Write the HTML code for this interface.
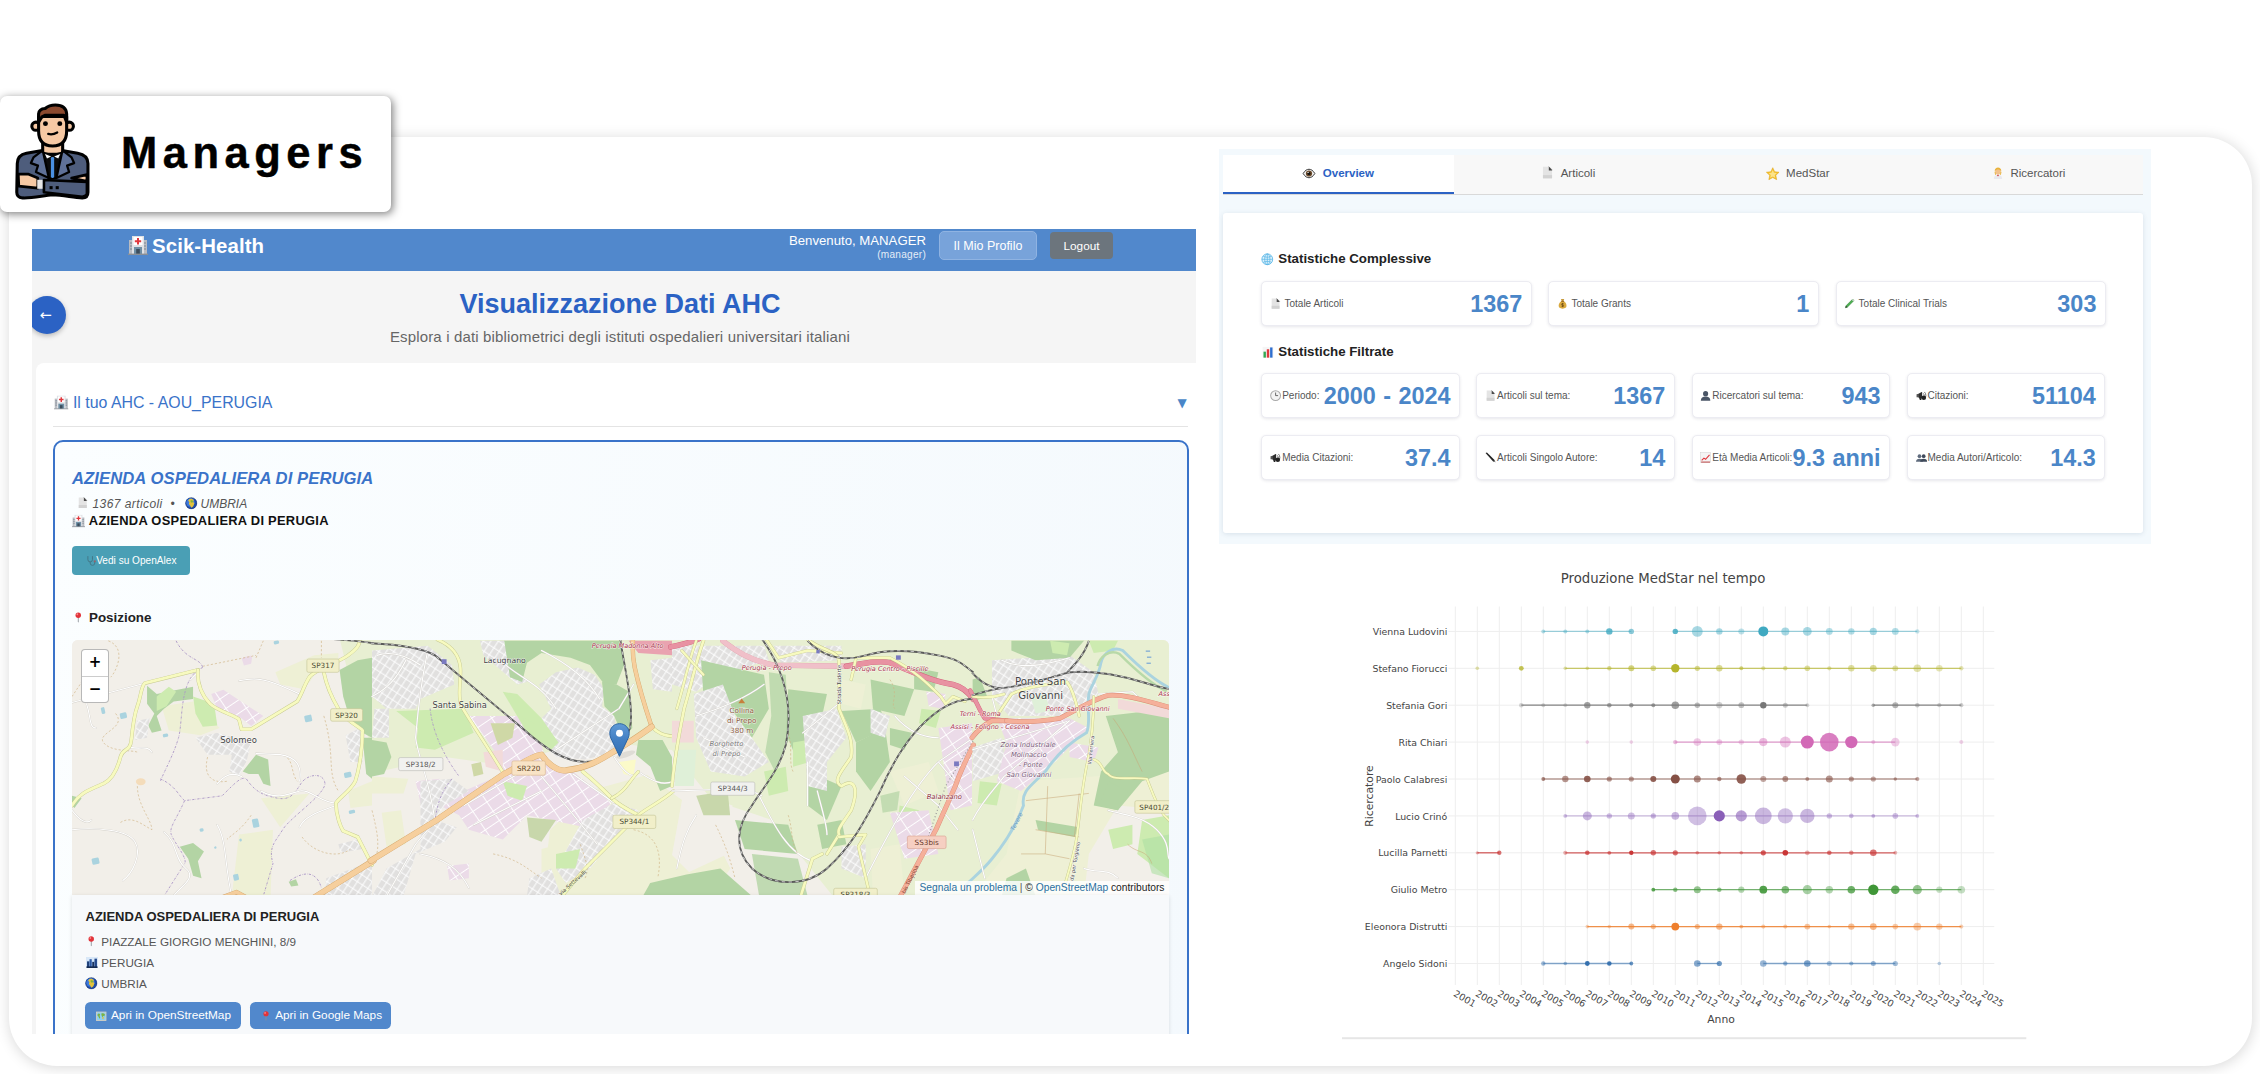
<!DOCTYPE html>
<html lang="it">
<head>
<meta charset="utf-8">
<title>Managers</title>
<style>
*{box-sizing:border-box;margin:0;padding:0}
html,body{width:2260px;height:1074px;overflow:hidden;background:#fff}
body{position:relative;font-family:"Liberation Sans",sans-serif;color:#222}
.abs{position:absolute}
svg{display:block}
.i{position:absolute;overflow:visible}
#outer{left:9.3px;top:137px;width:2242.7px;height:929px;background:#fff;border-radius:48px;box-shadow:.5px 1.5px 14px rgba(0,0,0,.15)}
#badge{left:0;top:96px;width:391px;height:116px;background:#fff;border-radius:7px;box-shadow:1.5px 2px 8px rgba(0,0,0,.5)}
#badge .t{left:121px;top:28.5px;font-weight:bold;font-size:43.5px;letter-spacing:5.5px;color:#000;white-space:nowrap;line-height:56px;-webkit-text-stroke:.45px #000}
#app{left:32px;top:229px;width:1164px;height:805px;background:#f5f5f5;overflow:hidden}
#nav{left:0;top:0;width:1164px;height:42px;background:#5188cc;color:#fff}
#nav .brand{left:120px;top:5px;font-size:20.4px;font-weight:bold;line-height:24px;white-space:nowrap;letter-spacing:.1px}
#nav .wel{right:270px;top:3.5px;text-align:right;font-size:13.2px;line-height:16px;white-space:nowrap}
#nav .wel small{display:block;font-size:10.1px;line-height:11px;opacity:.85;letter-spacing:.25px}
#nav .b1{left:907px;top:2px;width:98px;height:29px;border-radius:5px;background:#78a3da;border:1px solid #8fb3e2;font-size:12.5px;line-height:28.4px;text-align:center}
#nav .b2{left:1018px;top:3px;width:63px;height:27px;border-radius:4px;background:#6c757d;font-size:11.8px;line-height:28.2px;text-align:center}
#back{left:-4px;top:67px;width:38px;height:38px;border-radius:50%;background:#2b62c4;color:#fff;box-shadow:0 2px 5px rgba(0,0,0,.25)}
#back span{position:absolute;left:11.5px;top:9.5px;font-family:"DejaVu Sans",sans-serif;font-size:14.5px;line-height:18px;color:#fff}
#ttl{left:0;top:58px;width:1176px;text-align:center;font-size:27px;font-weight:bold;color:#2b62c4;line-height:34px}
#sub{left:0;top:98px;width:1176px;text-align:center;font-size:15px;letter-spacing:.15px;color:#666;line-height:20px}
#cont{left:4px;top:133.5px;width:1170px;height:700px;background:#fff;border-radius:8px}
#sec{left:36.9px;top:30.9px;font-size:15.9px;color:#3a73c9;line-height:20px;white-space:nowrap}
#caret{left:1141.5px;top:32.5px;font-size:12px;line-height:16px;color:#4a86c8;font-family:"DejaVu Sans",sans-serif}
#hr{left:17px;top:63.5px;width:1135px;height:1px;background:#e4e4e4}
#card{left:17px;top:77px;width:1136px;height:640px;border:2px solid #3a73c9;border-radius:10px;background:linear-gradient(100deg,#fbfeff,#f4f9fd)}
#card .h{left:17px;top:27.3px;font-size:16.6px;font-weight:bold;font-style:italic;color:#3a73c9;line-height:20px;white-space:nowrap;letter-spacing:.1px}
#card .m{left:0;top:55.1px;font-size:12px;font-style:italic;color:#555;line-height:14px;white-space:nowrap}
#card .m span{position:absolute;top:0}
#card .n{left:33.8px;top:71.7px;font-size:12.9px;font-weight:bold;color:#111;line-height:16px;white-space:nowrap;letter-spacing:.27px}
#card .vb{left:17px;top:104.4px;width:118px;height:29.5px;border-radius:4px;background:#4a9fb5;color:#fff;font-size:10.1px;line-height:30px;white-space:nowrap}
#card .vb span{position:absolute;left:24.2px;top:0}
#card .pos{left:34px;top:167.3px;font-size:13.4px;font-weight:bold;color:#222;line-height:18px;white-space:nowrap}
#map{left:17px;top:198.2px;width:1097px;height:255px;border-radius:6px 6px 0 0;overflow:hidden;background:#f2efe9}
#zc{left:9px;top:9px;width:28px;height:54px;border:1.6px solid rgba(0,0,0,.28);border-radius:4px;background:#fff}
#zc div{position:absolute;left:0;width:100%;text-align:center;font-weight:bold;color:#000;font-size:15px;line-height:25px;font-family:"DejaVu Sans","Liberation Sans",sans-serif}
#attr{right:0;bottom:0;height:13.6px;padding:0 4.5px 0 4px;background:rgba(255,255,255,.82);font-size:10.25px;line-height:13.6px;color:#222;white-space:nowrap}
#attr b{font-weight:normal;color:#2a6fa0}
#info{left:17px;top:453.2px;width:1097px;height:200px;background:#f7f9fb;box-shadow:0 1px 4px rgba(0,0,0,.12)}
#info .a{left:13.5px;top:13.2px;font-size:13px;font-weight:bold;color:#222;line-height:18px;white-space:nowrap}
#info .r{left:29.3px;font-size:11.7px;color:#555;line-height:16px;white-space:nowrap;letter-spacing:.02px}
#info .bt{top:107.8px;height:27px;border-radius:5.5px;background:#5188cc;color:#fff;font-size:11.8px;line-height:27px;white-space:nowrap}
#info .bt span{position:absolute;top:0}
#stats{left:1219px;top:149px;width:932px;height:395px;background:#f3f9fd}
#tabs{left:4.3px;top:5.6px;width:919.5px;height:40.8px;background:#f8f8f8;border-bottom:1.6px solid #d9d9d9}
#tabs .tb{top:0;width:229.9px;height:39.2px;font-size:11.5px;line-height:36.8px;color:#555;white-space:nowrap}
#tabs .tb.on{background:#fff;color:#2b62c4;font-weight:bold;border-bottom:2.4px solid #2b62c4;width:230.6px}
#tabs .tb span{position:absolute;top:0}
#pan{left:4.3px;top:64.4px;width:919.5px;height:320px;background:#fff;border-radius:3px;box-shadow:0 1px 5px rgba(40,70,110,.13)}
#pan h4{position:absolute;left:55px;font-size:13.3px;font-weight:bold;color:#222;line-height:16px;white-space:nowrap}
.sc{position:absolute;height:45.2px;background:#fff;border:1px solid #ececf2;border-radius:5px;box-shadow:0 1px 3px rgba(60,60,90,.12)}
.sc .l{position:absolute;top:0;font-size:10px;line-height:43.4px;color:#555;white-space:nowrap}
.sc .v{position:absolute;right:8.5px;top:0;font-size:23.4px;font-weight:bold;line-height:44.4px;color:#4a86c8;white-space:nowrap;word-spacing:1px}
</style>
</head>
<body>
<svg width="0" height="0" style="position:absolute">
<defs>
<symbol id="i-hosp" viewBox="0 0 20 20"><rect x="1" y="5" width="18" height="14" fill="#b9bcc2"/><rect x="4" y="1" width="12" height="18" fill="#dfe2e6"/><rect x="5.5" y="2" width="9" height="8" fill="#fff"/><path d="M9 3h2v2.2h2.2v2H11v2.3H9V7.2H6.8v-2H9z" fill="#e0383e"/><rect x="6" y="12" width="8" height="7" fill="#6f8fa5"/><rect x="8.2" y="14" width="3.6" height="5" fill="#3b4d5c"/><path d="M2 8h2M2 11h2M2 14h2M16 8h2M16 11h2M16 14h2" stroke="#7d8793" stroke-width="1.2"/><rect x="0" y="18.6" width="20" height="1.4" fill="#8a8f96"/></symbol>
<symbol id="i-doc" viewBox="0 0 20 20"><path d="M3 1h9l5 5v13H3z" fill="#e4e4e4"/><path d="M3 14l14 0v5H3z" fill="#d2d2d2"/><path d="M12 1v6h5.5z" fill="#4a4a4a"/><path d="M12 1l5 5" stroke="#333" stroke-width=".8"/></symbol>
<symbol id="i-globe" viewBox="0 0 20 20"><circle cx="10" cy="10" r="9" fill="#2a5fc4"/><circle cx="10" cy="10" r="9" fill="#163a8a" fill-opacity=".5"/><circle cx="8.5" cy="8.5" r="7" fill="#3b78dd"/><path d="M7 3c3-1 6 0 7 2l-1 3 2 2-2 5-3 2-2-4-2-2 1-3-2-2z" fill="#e2c23b"/><path d="M9 5l3 0 1 3-2 1-2-1z" fill="#7fb13c"/><circle cx="10" cy="10" r="9" fill="none" stroke="#0f2a66" stroke-width=".8"/></symbol>
<symbol id="i-steth" viewBox="0 0 20 20"><path d="M5 2v6a4 4 0 0 0 8 0V2M9 12v2a4 4 0 0 0 8 0v-2" fill="none" stroke="#3d5560" stroke-width="1.6"/><circle cx="17" cy="11" r="2" fill="#c33"/></symbol>
<symbol id="i-pin" viewBox="0 0 20 20"><path d="M9.2 9h1.6v10l-.8 1-.8-1z" fill="#8a8f96"/><circle cx="10" cy="6" r="5.2" fill="#e2333a"/><circle cx="8.2" cy="4.3" r="1.7" fill="#f58a8a"/></symbol>
<symbol id="i-city" viewBox="0 0 20 20"><rect width="20" height="20" fill="#bcd6f2"/><rect x="0" y="0" width="20" height="7" fill="#d9e8f8"/><rect x="1" y="8" width="4" height="12" fill="#1f3f77"/><rect x="5.5" y="4" width="4" height="16" fill="#2c5aa6"/><rect x="10.5" y="9" width="3.5" height="11" fill="#18305c"/><rect x="14.5" y="3" width="4.5" height="17" fill="#23488a"/><rect x="0" y="17" width="20" height="3" fill="#142a50"/></symbol>
<symbol id="i-map" viewBox="0 0 20 20"><rect x="1" y="2" width="18" height="16" fill="#8fd0f2" stroke="#d9d2c0" stroke-width="1.6"/><path d="M3 6c2-2 4-1 5 0l-1 3 1 4-2 2-1-4-2-2zM10 5c2-1 5-1 7 1l-1 4-2-1-1 3-2-2z" fill="#7bb342"/><path d="M12 11l3 1-1 4-2-1z" fill="#e2c23b"/></symbol>
<symbol id="i-eye" viewBox="0 0 20 20"><path d="M1 10c3-5 6-6.5 9-6.5S16 5 19 10c-3 5-6 6.5-9 6.5S4 15 1 10z" fill="#f4f4f4" stroke="#333" stroke-width="1.5"/><circle cx="10" cy="10" r="4.8" fill="#6b4a2a"/><circle cx="10" cy="10" r="2.4" fill="#111"/><circle cx="8.6" cy="8.4" r="1" fill="#fff"/></symbol>
<symbol id="i-star" viewBox="0 0 20 20"><path d="M10 1l2.8 6 6.6.8-4.9 4.5 1.3 6.5L10 15.600 4.200 18.800l1.300-6.500L.6 7.800l6.600-.8z" fill="#f6c330" stroke="#e0a315" stroke-width=".8"/><path d="M10 4.500l1.800 3.900 4.200.5-3.100 2.900.8 4.200L10 13.900l-3.700 2.100.8-4.200L4 8.900l4.200-.5z" fill="#fbe38a"/></symbol>
<symbol id="i-sci" viewBox="0 0 20 20"><path d="M3 20c0-5 3-7 7-7s7 2 7 7z" fill="#e9e9ef"/><path d="M8 13l2 3 2-3z" fill="#c33"/><circle cx="10" cy="7.500" r="4.800" fill="#f2c18c"/><path d="M4.500 7c0-4 2.500-6 5.500-6s5.500 2 5.500 6c-2-2-3-3-5.500-3S6.500 5 4.500 7z" fill="#e8b23a"/><path d="M5 8l1 5M15 8l-1 5" stroke="#e8b23a" stroke-width="1.600"/></symbol>
<symbol id="i-web" viewBox="0 0 20 20"><circle cx="10" cy="10" r="8.600" fill="#dff1fb" stroke="#52b4e6" stroke-width="1.300"/><path d="M10 1.400v17.200M1.400 10h17.200M3.500 5.200c4 2 9 2 13 0M3.500 14.800c4-2 9-2 13 0" fill="none" stroke="#52b4e6" stroke-width="1.100"/><ellipse cx="10" cy="10" rx="4.200" ry="8.600" fill="none" stroke="#52b4e6" stroke-width="1.100"/></symbol>
<symbol id="i-bars" viewBox="0 0 20 20"><rect x="1" y="1" width="18" height="18" fill="#f5f5f5"/><rect x="2.500" y="9" width="4" height="10" fill="#35a853"/><rect x="8" y="5" width="4" height="14" fill="#e0383e"/><rect x="13.500" y="2" width="4" height="17" fill="#2f6fd0"/></symbol>
<symbol id="i-bag" viewBox="0 0 20 20"><path d="M7 2h6l-1.500 3.500h-3z" fill="#c89b3c"/><path d="M8 5.500h4c3 2 5 5 5 8.500 0 3-2 5-7 5s-7-2-7-5c0-3.500 2-6.500 5-8.500z" fill="#d9a93f"/><rect x="7.500" y="5" width="5" height="1.600" fill="#8a5a1c"/><path d="M10 9v7M12 10.500c-1.500-1-4-.6-4 .8 0 1.800 4 1 4 2.800 0 1.300-2.500 1.600-4 .6" fill="none" stroke="#5c3d0e" stroke-width="1.100"/></symbol>
<symbol id="i-tube" viewBox="0 0 20 20"><path d="M15.500 2l2.500 2.500L6 16.500l-3.500 1 1-3.500z" fill="#4caf50" stroke="#2e7d32" stroke-width=".8"/><path d="M15.500 2l2.500 2.500-1.500 1.500L14 3.500z" fill="#ddd"/><path d="M2.500 17.500l1-3.500 2.500 2.500z" fill="#333"/></symbol>
<symbol id="i-clock" viewBox="0 0 20 20"><circle cx="10" cy="10" r="8.800" fill="#f3f3f3" stroke="#a9a9a9" stroke-width="1.800"/><path d="M10 4.500V10h4.500" fill="none" stroke="#444" stroke-width="1.400"/></symbol>
<symbol id="i-bust" viewBox="0 0 20 20"><circle cx="10" cy="6.500" r="4.600" fill="#4a5566"/><path d="M1.500 19c0-5 3.500-7.500 8.500-7.500s8.500 2.500 8.500 7.500z" fill="#4a5566"/></symbol>
<symbol id="i-busts" viewBox="0 0 24 20"><circle cx="7.500" cy="7" r="4" fill="#5f6b7d"/><path d="M0 19c0-4.500 3-6.500 7.500-6.500S15 14.500 15 19z" fill="#5f6b7d"/><circle cx="16.500" cy="7" r="4" fill="#3f4a5b"/><path d="M9 19c0-4.500 3-6.500 7.500-6.500S24 14.500 24 19z" fill="#3f4a5b"/></symbol>
<symbol id="i-horn" viewBox="0 0 20 20"><path d="M2 8l9-5v13l-9-4z" fill="#2d2d2d"/><rect x="1" y="7.500" width="4" height="5.500" fill="#555"/><path d="M5 13l2 5h3l-2-5z" fill="#222"/><path d="M13 6c2 1.500 2 6 0 7.500M15 3.500c3.500 3 3.500 9.500 0 12.500" fill="none" stroke="#555" stroke-width="1.400"/><circle cx="14" cy="14" r="4" fill="#222"/></symbol>
<symbol id="i-pen" viewBox="0 0 20 20"><path d="M1 2l2.500-1L17 14.500l1.500 4-4-1.500z" fill="#222"/><path d="M14.500 17l2.500-2.500 1.500 4z" fill="#888"/></symbol>
<symbol id="i-trend" viewBox="0 0 20 20"><rect x="1" y="1" width="18" height="18" fill="#f4f4f4" stroke="#ccc" stroke-width=".800"/><path d="M3 15l4-4 3 2 7-8" fill="none" stroke="#e0383e" stroke-width="2"/><path d="M2 18h16" stroke="#b33" stroke-width="1.600"/></symbol>
</defs>
</svg>

<div id="outer" class="abs"></div>
<div id="app" class="abs">
  <div id="nav" class="abs">
    <svg class="i" style="left:96px;top:6px;width:20px;height:20px" ><use href="#i-hosp"/></svg><div class="brand abs">Scik-Health</div>
    <div class="wel abs">Benvenuto, MANAGER<small>(manager)</small></div>
    <div class="b1 abs">Il Mio Profilo</div>
    <div class="b2 abs">Logout</div>
  </div>
  <div id="ttl" class="abs">Visualizzazione Dati AHC</div>
  <div id="sub" class="abs">Esplora i dati bibliometrici degli istituti ospedalieri universitari italiani</div>
  <div id="back" class="abs"><span>←</span></div>
  <div id="cont" class="abs">
    <svg class="i" style="left:17.8px;top:32.3px;width:14.5px;height:14.5px" ><use href="#i-hosp"/></svg><div id="sec" class="abs">Il tuo AHC - AOU_PERUGIA</div>
    <div id="caret" class="abs">▼</div>
    <div id="hr" class="abs"></div>
    <div id="card" class="abs">
      <div class="h abs">AZIENDA OSPEDALIERA DI PERUGIA</div>
      <div class="m abs"><svg class="i" style="left:22.2px;top:0px;width:11.5px;height:11.5px" ><use href="#i-doc"/></svg><span style="left:37.5px;letter-spacing:.42px">1367 articoli</span><span style="left:115.5px">•</span><svg class="i" style="left:129.7px;top:0px;width:12.5px;height:12.5px" ><use href="#i-globe"/></svg><span style="left:145.5px">UMBRIA</span></div>
      <svg class="i" style="left:17px;top:72px;width:13px;height:13.5px" ><use href="#i-hosp"/></svg><div class="n abs">AZIENDA OSPEDALIERA DI PERUGIA</div>
      <div class="vb abs"><svg class="i" style="left:12.5px;top:9.5px;width:11.5px;height:11.5px" opacity=".55"><use href="#i-steth"/></svg><span>Vedi su OpenAlex</span></div>
      <svg class="i" style="left:18px;top:169.5px;width:10.5px;height:12.5px" ><use href="#i-pin"/></svg><div class="pos abs">Posizione</div>
      <div id="map" class="abs"><svg width="1097" height="255" viewBox="0 0 1097 255" font-family="DejaVu Sans, Verdana, sans-serif">
<rect width="1097" height="255" fill="#f2efe9"/>
<polygon points="268,0 1097,0 1097,255 760,255 700,180 640,160 600,110 520,100 430,125 373,117 310,131 285,70" fill="#e8efd2"/>
<defs><pattern id="st" width="26" height="34" patternUnits="userSpaceOnUse" patternTransform="rotate(33)"><rect width="26" height="34" fill="#e1e0df"/><path d="M0 5H26M7 0V34" stroke="#fff" stroke-width="4"/></pattern><pattern id="si" width="70" height="46" patternUnits="userSpaceOnUse" patternTransform="rotate(-34)"><rect width="70" height="46" fill="#ebdbe8"/><path d="M0 6H70M10 0V46" stroke="#fff" stroke-width="4"/></pattern></defs>
<g transform="translate(0,-4) scale(0.24213)"></g><g transform="translate(300,-4) scale(0.24213)"><polygon points="700,880 1000,800 1239,780 1420,840 1480,960 1400,1074 700,1074" fill="#eef0d5"/></g><g transform="translate(600,-4) scale(0.24213)"><polygon points="-200,560 0,620 250,700 230,900 60,980 -200,1074" fill="#f2efe9"/></g><g transform="translate(828,-4) scale(0.24213)"><polygon points="500,600 1111,560 1111,1074 300,1074 440,900" fill="#eef0d5"/><polygon points="900,700 1111,720 1111,1074 760,1074 780,900" fill="#f2efe9"/></g>
<polygon points="478,190 520,150 575,135 610,160 600,215 640,255 470,255" fill="#eef0d5"/>
<g transform="translate(0,-4) scale(0.24213)"><polygon points="840,150 1000,80 1100,70 1100,110 1010,150 960,220 860,200" fill="#eef0d5"/><polygon points="370,290 500,270 610,380 530,410 400,390" fill="#eef0d5"/><polygon points="780,670 980,650 860,790" fill="#eef0d5"/><polygon points="690,820 830,800 820,1074 660,1074" fill="#eef0d5"/><polygon points="1140,640 1239,600 1239,700 1150,710" fill="#eef0d5"/><polygon points="575,240 625,222 790,330 740,372 700,340 600,300" fill="url(#si)"/><polygon points="700,90 745,80 740,115 710,122" fill="url(#si)"/><polygon points="310,205 350,240 420,225 500,210 500,260 420,270 380,300 350,330 370,390 330,400 315,370 340,320 310,280" fill="#b3d4a4"/><polygon points="350,250 400,210 430,230 390,290 350,310" fill="#cdebb0"/><polygon points="500,250 560,270 590,300 600,370 540,375 510,320" fill="#cdebb0"/><polygon points="705,560 760,490 810,510 820,620 790,610 770,570 730,570" fill="#b3d4a4"/><polygon points="445,870 500,855 545,890 520,930 535,1000 500,990 480,920" fill="#b3d4a4"/><polygon points="1105,140 1180,100 1239,90 1239,420 1200,400 1150,350 1120,250" fill="#b3d4a4"/><polygon points="1200,420 1239,420 1239,590 1215,570" fill="#b3d4a4"/><polygon points="0,660 40,670 10,710 0,700" fill="#b3d4a4"/><polygon points="895,1015 925,1005 935,1030 905,1035" fill="#b3d4a4"/><polygon points="510,420 600,400 740,440 720,520 690,580 650,560 660,490 560,490" fill="url(#st)"/><polygon points="1050,1000 1239,930 1239,1074 1040,1074" fill="url(#st)"/><polygon points="1100,860 1180,840 1200,880 1110,895" fill="url(#st)"/><polygon points="1130,410 1190,380 1200,520 1150,520" fill="url(#st)"/><polygon points="270,350 320,340 310,420 260,430" fill="url(#st)"/><rect x="118" y="296" width="15" height="28" rx="5" fill="#aad3df" transform="rotate(-12 118 296)"/><rect x="196" y="320" width="28" height="24" rx="5" fill="#aad3df" transform="rotate(-12 196 320)"/><rect x="374" y="406" width="22" height="14" rx="5" fill="#aad3df" transform="rotate(-12 374 406)"/><rect x="958" y="330" width="30" height="28" rx="5" fill="#aad3df" transform="rotate(-12 958 330)"/><rect x="742" y="758" width="26" height="36" rx="5" fill="#aad3df" transform="rotate(-12 742 758)"/><rect x="80" y="920" width="30" height="26" rx="5" fill="#aad3df" transform="rotate(-12 80 920)"/><rect x="664" y="986" width="22" height="26" rx="5" fill="#aad3df" transform="rotate(-12 664 986)"/><rect x="1122" y="566" width="30" height="22" rx="5" fill="#aad3df" transform="rotate(-12 1122 566)"/><rect x="1142" y="722" width="26" height="14" rx="5" fill="#aad3df" transform="rotate(-12 1142 722)"/><rect x="526" y="796" width="16" height="14" rx="5" fill="#aad3df" transform="rotate(-12 526 796)"/><rect x="832" y="22" width="22" height="14" rx="5" fill="#aad3df" transform="rotate(-12 832 22)"/><rect x="586" y="870" width="10" height="10" rx="5" fill="#aad3df" transform="rotate(-12 586 870)"/><rect x="690" y="838" width="10" height="12" rx="5" fill="#aad3df" transform="rotate(-12 690 838)"/><ellipse cx="284" cy="602" rx="20" ry="14" fill="#f4dcba"/><path d="M150 20 C230 50 180 150 160 170" stroke="#cfb283" stroke-width="2.6" fill="none" stroke-dasharray="9 8"/><path d="M0 250 L40 190" stroke="#cfb283" stroke-width="2.6" fill="none" stroke-dasharray="9 8"/><path d="M540 125 L760 80" stroke="#cfb283" stroke-width="2.6" fill="none" stroke-dasharray="9 8"/><path d="M180 320 C230 380 100 400 130 440 S250 470 270 480" stroke="#cfb283" stroke-width="2.6" fill="none" stroke-dasharray="9 8"/><path d="M270 620 C270 700 330 760 330 800" stroke="#cfb283" stroke-width="2.6" fill="none" stroke-dasharray="9 8"/><path d="M200 770 C250 740 290 780 330 800" stroke="#cfb283" stroke-width="2.6" fill="none" stroke-dasharray="9 8"/><path d="M1040 330 C1090 500 1050 560 1100 640" stroke="#cfb283" stroke-width="2.6" fill="none" stroke-dasharray="9 8"/><path d="M950 830 C1000 900 1100 920 1150 880" stroke="#cfb283" stroke-width="2.6" fill="none" stroke-dasharray="9 8"/><path d="M760 90 L790 20" stroke="#cfb283" stroke-width="2.6" fill="none" stroke-dasharray="9 8"/><path d="M1030 20 L1030 90" stroke="#cfb283" stroke-width="2.6" fill="none" stroke-dasharray="9 8"/><path d="M560 500 C540 580 580 610 640 600" stroke="#cfb283" stroke-width="2.6" fill="none" stroke-dasharray="9 8"/><path d="M740 740 C700 800 660 820 640 840" stroke="#cfb283" stroke-width="2.6" fill="none" stroke-dasharray="9 8"/><path d="M860 490 C920 500 900 560 930 600" stroke="#cfb283" stroke-width="2.6" fill="none" stroke-dasharray="9 8"/><path d="M430 20 C470 100 530 90 540 130" stroke="#ab96c6" stroke-width="3.8" fill="none" stroke-dasharray="9 5 2 5"/><path d="M540 130 C440 170 460 350 440 420 S380 560 365 600" stroke="#ab96c6" stroke-width="3.8" fill="none" stroke-dasharray="9 5 2 5"/><path d="M365 590 C430 620 440 660 465 680 L620 660 C680 600 700 580 720 590 C760 650 800 660 850 670 S920 650 945 610 S1040 560 1045 610 C1040 660 900 750 870 800 S810 870 830 940 L790 1074" stroke="#ab96c6" stroke-width="3.8" fill="none" stroke-dasharray="9 5 2 5"/><path d="M465 680 C430 760 400 790 410 820 S480 920 465 940 L380 1074" stroke="#ab96c6" stroke-width="3.8" fill="none" stroke-dasharray="9 5 2 5"/><path d="M900 1010 C960 970 1010 970 1030 1040" stroke="#ab96c6" stroke-width="3.8" fill="none" stroke-dasharray="9 5 2 5"/><path d="M0 275 L300 195" stroke="#d3d0ca" stroke-width="7.1" fill="none" stroke-linecap="round" stroke-linejoin="round"/><path d="M0 275 L300 195" stroke="#ffffff" stroke-width="4.5" fill="none" stroke-linecap="round" stroke-linejoin="round"/><path d="M690 185 C760 170 800 180 850 200 S920 230 940 240" stroke="#d3d0ca" stroke-width="7.1" fill="none" stroke-linecap="round" stroke-linejoin="round"/><path d="M690 185 C760 170 800 180 850 200 S920 230 940 240" stroke="#ffffff" stroke-width="4.5" fill="none" stroke-linecap="round" stroke-linejoin="round"/><path d="M0 800 C100 790 230 800 260 850 S250 980 210 1010" stroke="#d3d0ca" stroke-width="7.1" fill="none" stroke-linecap="round" stroke-linejoin="round"/><path d="M0 800 C100 790 230 800 260 850 S250 980 210 1010" stroke="#ffffff" stroke-width="4.5" fill="none" stroke-linecap="round" stroke-linejoin="round"/><path d="M600 610 C640 560 680 570 700 580" stroke="#d3d0ca" stroke-width="7.1" fill="none" stroke-linecap="round" stroke-linejoin="round"/><path d="M600 610 C640 560 680 570 700 580" stroke="#ffffff" stroke-width="4.5" fill="none" stroke-linecap="round" stroke-linejoin="round"/><path d="M940 600 C950 540 930 500 860 490 L760 485" stroke="#d3d0ca" stroke-width="7.1" fill="none" stroke-linecap="round" stroke-linejoin="round"/><path d="M940 600 C950 540 930 500 860 490 L760 485" stroke="#ffffff" stroke-width="4.5" fill="none" stroke-linecap="round" stroke-linejoin="round"/><path d="M600 780 C640 850 630 950 660 1074" stroke="#d3d0ca" stroke-width="7.1" fill="none" stroke-linecap="round" stroke-linejoin="round"/><path d="M600 780 C640 850 630 950 660 1074" stroke="#ffffff" stroke-width="4.5" fill="none" stroke-linecap="round" stroke-linejoin="round"/><path d="M780 640 C850 680 900 650 940 640 S1030 690 1090 690" stroke="#d3d0ca" stroke-width="7.1" fill="none" stroke-linecap="round" stroke-linejoin="round"/><path d="M780 640 C850 680 900 650 940 640 S1030 690 1090 690" stroke="#ffffff" stroke-width="4.5" fill="none" stroke-linecap="round" stroke-linejoin="round"/><path d="M0 720 C30 760 60 780 80 760" stroke="#d3d0ca" stroke-width="7.1" fill="none" stroke-linecap="round" stroke-linejoin="round"/><path d="M0 720 C30 760 60 780 80 760" stroke="#ffffff" stroke-width="4.5" fill="none" stroke-linecap="round" stroke-linejoin="round"/><path d="M60 280 C80 340 70 380 100 380" stroke="#d3d0ca" stroke-width="7.1" fill="none" stroke-linecap="round" stroke-linejoin="round"/><path d="M60 280 C80 340 70 380 100 380" stroke="#ffffff" stroke-width="4.5" fill="none" stroke-linecap="round" stroke-linejoin="round"/><path d="M380 810 C440 860 420 920 470 960 S440 1040 420 1074" stroke="#d3d0ca" stroke-width="7.1" fill="none" stroke-linecap="round" stroke-linejoin="round"/><path d="M380 810 C440 860 420 920 470 960 S440 1040 420 1074" stroke="#ffffff" stroke-width="4.5" fill="none" stroke-linecap="round" stroke-linejoin="round"/><path d="M940 790 C960 740 1040 720 1090 700" stroke="#d3d0ca" stroke-width="7.1" fill="none" stroke-linecap="round" stroke-linejoin="round"/><path d="M940 790 C960 740 1040 720 1090 700" stroke="#ffffff" stroke-width="4.5" fill="none" stroke-linecap="round" stroke-linejoin="round"/><path d="M490 180 L520 150" stroke="#d3d0ca" stroke-width="7.1" fill="none" stroke-linecap="round" stroke-linejoin="round"/><path d="M490 180 L520 150" stroke="#ffffff" stroke-width="4.5" fill="none" stroke-linecap="round" stroke-linejoin="round"/><path d="M240 460 C290 470 310 450 330 480" stroke="#d3d0ca" stroke-width="7.1" fill="none" stroke-linecap="round" stroke-linejoin="round"/><path d="M240 460 C290 470 310 450 330 480" stroke="#ffffff" stroke-width="4.5" fill="none" stroke-linecap="round" stroke-linejoin="round"/><path d="M0 700 C30 650 60 640 130 610 C170 590 190 540 200 500 S240 480 245 430 S255 330 270 290 S285 210 300 195 L520 140" stroke="#c4c78e" stroke-width="15" fill="none" stroke-linecap="round" stroke-linejoin="round"/><path d="M0 700 C30 650 60 640 130 610 C170 590 190 540 200 500 S240 480 245 430 S255 330 270 290 S285 210 300 195 L520 140" stroke="#f7fabf" stroke-width="12" fill="none" stroke-linecap="round" stroke-linejoin="round"/><path d="M520 140 C515 200 540 250 570 280 S680 330 690 345 L700 385 L740 385 L930 270 C950 240 960 200 980 170 S1100 110 1140 80 S1185 40 1190 15" stroke="#c4c78e" stroke-width="15" fill="none" stroke-linecap="round" stroke-linejoin="round"/><path d="M520 140 C515 200 540 250 570 280 S680 330 690 345 L700 385 L740 385 L930 270 C950 240 960 200 980 170 S1100 110 1140 80 S1185 40 1190 15" stroke="#f7fabf" stroke-width="12" fill="none" stroke-linecap="round" stroke-linejoin="round"/><path d="M1040 150 C1050 200 1070 250 1100 300 S1180 370 1200 390 C1200 450 1190 540 1170 600 C1150 640 1100 670 1090 690 C1090 740 1110 790 1120 805 L1180 830 L1239 945" stroke="#c4c78e" stroke-width="15" fill="none" stroke-linecap="round" stroke-linejoin="round"/><path d="M1040 150 C1050 200 1070 250 1100 300 S1180 370 1200 390 C1200 450 1190 540 1170 600 C1150 640 1100 670 1090 690 C1090 740 1110 790 1120 805 L1180 830 L1239 945" stroke="#f7fabf" stroke-width="12" fill="none" stroke-linecap="round" stroke-linejoin="round"/><path d="M1000 1080 L1245 928" stroke="#d3a76c" stroke-width="25" fill="none" stroke-linecap="round" stroke-linejoin="round"/><path d="M1000 1080 L1245 928" stroke="#f6cf9d" stroke-width="22" fill="none" stroke-linecap="round" stroke-linejoin="round"/><path d="M620 1080 L680 1058 L720 1080" stroke="#d3a76c" stroke-width="19" fill="none" stroke-linecap="round" stroke-linejoin="round"/><path d="M620 1080 L680 1058 L720 1080" stroke="#f6cf9d" stroke-width="16" fill="none" stroke-linecap="round" stroke-linejoin="round"/><path d="M1040 10 C1100 15 1180 20 1245 30" stroke="#5a5a5a" stroke-width="7.6" fill="none"/><path d="M1040 10 C1100 15 1180 20 1245 30" stroke="#fff" stroke-width="2.8" fill="none" stroke-dasharray="14 14"/></g>
<g transform="translate(300,-4) scale(0.24213)"><polygon points="100,310 380,300 420,400 260,470 180,460 190,380" fill="#cdebb0"/><polygon points="0,580 150,590 130,650 0,650" fill="#eef0d5"/><polygon points="40,730 120,720 140,860 60,870" fill="#eef0d5"/><polygon points="400,330 600,330 700,450 720,520 830,560 990,690 880,790 640,740 540,840 400,800 360,740 280,700 380,640 540,570 540,520" fill="url(#si)"/><polygon points="180,600 280,590 300,690 200,690" fill="url(#si)"/><polygon points="310,950 400,940 400,1000 320,1010" fill="url(#si)"/><polygon points="460,480 540,470 540,560 470,540" fill="#f2dad9"/><polygon points="0,60 230,40 330,120 340,200 200,260 180,300 60,300 0,250" fill="url(#st)"/><polygon points="10,300 70,300 70,420 0,420" fill="url(#st)"/><polygon points="446,20 560,20 600,120 640,190 600,200 520,130 460,80" fill="url(#st)"/><polygon points="690,200 760,150 850,130 920,160 960,220 950,290 1000,330 1010,400 1050,440 1000,480 880,510 760,500 700,440 690,350 740,300" fill="url(#st)"/><polygon points="540,230 600,240 700,340 770,440 740,470 640,400" fill="#cdebb0"/><polygon points="200,600 330,590 400,640 300,700 260,760 350,790 300,850 180,900 130,1074 0,1074 60,960 200,880" fill="url(#st)"/><polygon points="870,760 1000,690 1100,720 900,960 800,1020 760,960" fill="url(#st)"/><polygon points="650,1000 740,960 780,1074 640,1074" fill="url(#st)"/><polygon points="1150,100 1239,90 1239,230 1160,220" fill="url(#st)"/><polygon points="546,20 1020,20 1045,110 1010,200 960,200 900,120 820,90 700,70 640,110 620,190 570,170" fill="#b3d4a4"/><polygon points="0,430 60,440 80,500 50,570 0,580" fill="#b3d4a4"/><polygon points="950,190 1010,200 1062,230 1075,380 1040,420 1000,330 960,290" fill="#b3d4a4"/><polygon points="1100,430 1200,430 1239,500 1239,620 1190,640 1150,540 1090,490" fill="#b3d4a4"/><polygon points="620,330 700,380 690,430 640,380" fill="#cdebb0"/><polygon points="640,750 760,760 700,850 650,830" fill="#c8d7ab"/><polygon points="760,900 860,880 840,960 760,960" fill="#cdebb0"/><polygon points="490,360 590,360 580,420 520,450" fill="#cfd8a6"/><polygon points="410,530 450,520 460,570 420,580" fill="#cfd8a6"/><polygon points="540,600 640,620 620,680 560,660" fill="#cdebb0"/><polygon points="1020,520 1090,510 1080,580 1040,570" fill="#fbfac9"/><polygon points="1060,20 1239,20 1239,80 1100,70" fill="#e9a3b0"/><path d="M230 60 C200 200 190 300 180 420 C190 500 240 600 260 765" stroke="#d3d0ca" stroke-width="7.1" fill="none" stroke-linecap="round" stroke-linejoin="round"/><path d="M230 60 C200 200 190 300 180 420 C190 500 240 600 260 765" stroke="#ffffff" stroke-width="4.5" fill="none" stroke-linecap="round" stroke-linejoin="round"/><path d="M700 580 L800 700 L930 860" stroke="#d3d0ca" stroke-width="7.1" fill="none" stroke-linecap="round" stroke-linejoin="round"/><path d="M700 580 L800 700 L930 860" stroke="#ffffff" stroke-width="4.5" fill="none" stroke-linecap="round" stroke-linejoin="round"/><path d="M760 470 L1020 300" stroke="#d3d0ca" stroke-width="7.1" fill="none" stroke-linecap="round" stroke-linejoin="round"/><path d="M760 470 L1020 300" stroke="#ffffff" stroke-width="4.5" fill="none" stroke-linecap="round" stroke-linejoin="round"/><path d="M260 765 L180 860 L60 1074" stroke="#d3d0ca" stroke-width="7.1" fill="none" stroke-linecap="round" stroke-linejoin="round"/><path d="M260 765 L180 860 L60 1074" stroke="#ffffff" stroke-width="4.5" fill="none" stroke-linecap="round" stroke-linejoin="round"/><path d="M20 80 C80 60 140 80 200 120" stroke="#d3d0ca" stroke-width="7.1" fill="none" stroke-linecap="round" stroke-linejoin="round"/><path d="M20 80 C80 60 140 80 200 120" stroke="#ffffff" stroke-width="4.5" fill="none" stroke-linecap="round" stroke-linejoin="round"/><path d="M540 110 C620 180 700 200 760 300" stroke="#d3d0ca" stroke-width="7.1" fill="none" stroke-linecap="round" stroke-linejoin="round"/><path d="M540 110 C620 180 700 200 760 300" stroke="#ffffff" stroke-width="4.5" fill="none" stroke-linecap="round" stroke-linejoin="round"/><path d="M700 60 C780 100 880 160 940 260" stroke="#d3d0ca" stroke-width="7.1" fill="none" stroke-linecap="round" stroke-linejoin="round"/><path d="M700 60 C780 100 880 160 940 260" stroke="#ffffff" stroke-width="4.5" fill="none" stroke-linecap="round" stroke-linejoin="round"/><path d="M1020 300 L1080 200" stroke="#d3d0ca" stroke-width="7.1" fill="none" stroke-linecap="round" stroke-linejoin="round"/><path d="M1020 300 L1080 200" stroke="#ffffff" stroke-width="4.5" fill="none" stroke-linecap="round" stroke-linejoin="round"/><path d="M0 250 C60 220 100 180 140 100" stroke="#d3d0ca" stroke-width="7.1" fill="none" stroke-linecap="round" stroke-linejoin="round"/><path d="M0 250 C60 220 100 180 140 100" stroke="#ffffff" stroke-width="4.5" fill="none" stroke-linecap="round" stroke-linejoin="round"/><path d="M380 700 L620 560" stroke="#d3d0ca" stroke-width="7.1" fill="none" stroke-linecap="round" stroke-linejoin="round"/><path d="M380 700 L620 560" stroke="#ffffff" stroke-width="4.5" fill="none" stroke-linecap="round" stroke-linejoin="round"/><path d="M420 780 L700 640" stroke="#d3d0ca" stroke-width="7.1" fill="none" stroke-linecap="round" stroke-linejoin="round"/><path d="M420 780 L700 640" stroke="#ffffff" stroke-width="4.5" fill="none" stroke-linecap="round" stroke-linejoin="round"/><path d="M830 570 L1000 690" stroke="#d3d0ca" stroke-width="7.1" fill="none" stroke-linecap="round" stroke-linejoin="round"/><path d="M830 570 L1000 690" stroke="#ffffff" stroke-width="4.5" fill="none" stroke-linecap="round" stroke-linejoin="round"/><path d="M1000 500 C1040 560 1080 600 1100 560" stroke="#d3d0ca" stroke-width="7.1" fill="none" stroke-linecap="round" stroke-linejoin="round"/><path d="M1000 500 C1040 560 1080 600 1100 560" stroke="#ffffff" stroke-width="4.5" fill="none" stroke-linecap="round" stroke-linejoin="round"/><path d="M200 900 C300 920 360 960 400 1040" stroke="#d3d0ca" stroke-width="7.1" fill="none" stroke-linecap="round" stroke-linejoin="round"/><path d="M200 900 C300 920 360 960 400 1040" stroke="#ffffff" stroke-width="4.5" fill="none" stroke-linecap="round" stroke-linejoin="round"/><path d="M1100 560 C1160 600 1200 620 1245 600" stroke="#d3d0ca" stroke-width="7.1" fill="none" stroke-linecap="round" stroke-linejoin="round"/><path d="M1100 560 C1160 600 1200 620 1245 600" stroke="#ffffff" stroke-width="4.5" fill="none" stroke-linecap="round" stroke-linejoin="round"/><path d="M240 300 C250 400 300 500 360 580" stroke="#ab96c6" stroke-width="3.8" fill="none" stroke-dasharray="9 5 2 5"/><path d="M330 590 C280 650 270 700 260 760" stroke="#ab96c6" stroke-width="3.8" fill="none" stroke-dasharray="9 5 2 5"/><path d="M500 900 C600 920 640 960 700 1000" stroke="#cfb283" stroke-width="2.6" fill="none" stroke-dasharray="9 8"/><path d="M0 720 C20 800 30 850 20 900" stroke="#cfb283" stroke-width="2.6" fill="none" stroke-dasharray="9 8"/><path d="M1080 800 C1180 820 1200 900 1180 1000" stroke="#cfb283" stroke-width="2.6" fill="none" stroke-dasharray="9 8"/><path d="M860 860 C880 920 900 960 880 1000" stroke="#cfb283" stroke-width="2.6" fill="none" stroke-dasharray="9 8"/><path d="M270 15 C330 40 360 80 365 130 S350 250 370 290 S480 460 545 570" stroke="#c4c78e" stroke-width="14" fill="none" stroke-linecap="round" stroke-linejoin="round"/><path d="M270 15 C330 40 360 80 365 130 S350 250 370 290 S480 460 545 570" stroke="#f7fabf" stroke-width="11" fill="none" stroke-linecap="round" stroke-linejoin="round"/><path d="M870 560 C920 600 960 640 990 670 S1060 720 1100 740" stroke="#c4c78e" stroke-width="16" fill="none" stroke-linecap="round" stroke-linejoin="round"/><path d="M870 560 C920 600 960 640 990 670 S1060 720 1100 740" stroke="#f7fabf" stroke-width="13" fill="none" stroke-linecap="round" stroke-linejoin="round"/><path d="M990 670 C1050 640 1060 600 1100 560" stroke="#c4c78e" stroke-width="13" fill="none" stroke-linecap="round" stroke-linejoin="round"/><path d="M990 670 C1050 640 1060 600 1100 560" stroke="#f7fabf" stroke-width="10" fill="none" stroke-linecap="round" stroke-linejoin="round"/><path d="M1100 740 L880 960 L780 1080" stroke="#c4c78e" stroke-width="14" fill="none" stroke-linecap="round" stroke-linejoin="round"/><path d="M1100 740 L880 960 L780 1080" stroke="#f7fabf" stroke-width="11" fill="none" stroke-linecap="round" stroke-linejoin="round"/><path d="M1155 375 C1180 400 1200 410 1245 415" stroke="#c4c78e" stroke-width="15" fill="none" stroke-linecap="round" stroke-linejoin="round"/><path d="M1155 375 C1180 400 1200 410 1245 415" stroke="#f7fabf" stroke-width="12" fill="none" stroke-linecap="round" stroke-linejoin="round"/><path d="M1245 640 C1200 680 1120 720 1100 740" stroke="#c4c78e" stroke-width="14" fill="none" stroke-linecap="round" stroke-linejoin="round"/><path d="M1245 640 C1200 680 1120 720 1100 740" stroke="#f7fabf" stroke-width="11" fill="none" stroke-linecap="round" stroke-linejoin="round"/><path d="M-5 30 C100 35 200 45 260 80 L620 380 C720 470 800 520 880 520 C960 520 1040 470 1065 380 C1085 300 1040 120 1025 10" stroke="#5a5a5a" stroke-width="7.6" fill="none"/><path d="M-5 30 C100 35 200 45 260 80 L620 380 C720 470 800 520 880 520 C960 520 1040 470 1065 380 C1085 300 1040 120 1025 10" stroke="#fff" stroke-width="2.8" fill="none" stroke-dasharray="14 14"/><path d="M1155 375 C1130 300 1100 200 1085 130 C1075 80 1075 50 1078 10" stroke="#d3a76c" stroke-width="18" fill="none" stroke-linecap="round" stroke-linejoin="round"/><path d="M1155 375 C1130 300 1100 200 1085 130 C1075 80 1075 50 1078 10" stroke="#f6cf9d" stroke-width="15" fill="none" stroke-linecap="round" stroke-linejoin="round"/><path d="M-5 928 L260 765 L545 570 C600 545 640 500 700 490 C720 520 760 560 800 555 C900 545 960 500 1010 470 C1080 430 1120 400 1155 375" stroke="#d3a76c" stroke-width="25" fill="none" stroke-linecap="round" stroke-linejoin="round"/><path d="M-5 928 L260 765 L545 570 C600 545 640 500 700 490 C720 520 760 560 800 555 C900 545 960 500 1010 470 C1080 430 1120 400 1155 375" stroke="#f6cf9d" stroke-width="22" fill="none" stroke-linecap="round" stroke-linejoin="round"/><rect x="288" y="96" width="20" height="20" fill="#7a7ac0"/></g>
<g transform="translate(600,-4) scale(0.24213)"><polygon points="0,40 380,40 400,100 200,160 100,230 0,200" fill="url(#st)"/><polygon points="420,40 700,40 700,100 450,110" fill="url(#st)"/><polygon points="120,100 380,160 400,300 330,420 230,280 130,250" fill="#b3d4a4"/><polygon points="90,240 210,200 260,330 330,420 400,520 300,580 160,560 100,420" fill="url(#st)"/><polygon points="480,220 640,240 600,420 520,520 470,400" fill="#b3d4a4"/><polygon points="760,440 880,380 900,520 820,640 760,560" fill="#b3d4a4"/><polygon points="-90,1020 60,985 200,960 330,1074 -120,1074" fill="#b3d4a4"/><polygon points="560,560 700,620 640,760 560,700" fill="#b3d4a4"/><polygon points="260,760 480,780 520,900 300,880" fill="#b3d4a4"/><polygon points="820,180 1000,220 960,330 830,300" fill="#b3d4a4"/><polygon points="380,560 470,540 480,640 400,660" fill="#cdebb0"/><polygon points="600,380 660,380 650,500 590,500" fill="#cdebb0"/><polygon points="100,660 230,640 240,740 130,740" fill="#c8d7ab"/><polygon points="940,700 1020,720 1000,800 930,780" fill="#cdebb0"/><polygon points="700,180 800,200 780,300 700,280" fill="#eef0d5"/><polygon points="900,560 1060,520 1100,640 960,700" fill="#eef0d5"/><polygon points="820,880 940,860 960,1074 830,1074" fill="#eef0d5"/><polygon points="400,150 470,160 482,430 425,560 385,480 410,330" fill="#b3d4a4" fill-opacity="0.75"/><polygon points="700,310 860,300 890,380 760,440" fill="#b3d4a4"/><polygon points="330,900 520,920 560,1074 360,1074" fill="#b3d4a4" fill-opacity="0.8"/><polygon points="600,780 700,760 720,860 620,880" fill="#b3d4a4"/><polygon points="1000,130 1100,150 1080,230 1000,220" fill="#b3d4a4"/><polygon points="900,380 990,400 960,470 900,450" fill="#b3d4a4"/><polygon points="500,440 560,430 570,520 500,540" fill="#cdebb0"/><polygon points="1030,300 1110,310 1090,380 1020,360" fill="#cdebb0"/><polygon points="860,660 940,640 930,720 870,730" fill="#b3d4a4" fill-opacity="0.7"/><polygon points="540,330 680,300 720,420 640,520 640,640 560,620" fill="url(#st)"/><polygon points="700,870 800,860 800,1000 700,960" fill="url(#st)"/><polygon points="820,300 900,330 880,420 820,400" fill="url(#st)"/><polygon points="0,350 90,350 90,440 0,440" fill="#f2dad9"/><polygon points="20,470 100,470 90,620 10,620" fill="#dff0d8"/><polygon points="900,730 1060,720 1100,900 960,920" fill="url(#si)"/><polygon points="1100,380 1239,360 1239,700 1150,720" fill="url(#si)"/><polygon points="1050,230 1130,240 1120,300 1060,290" fill="url(#si)"/><path d="M800 1000 C900 800 1000 620 1100 520 L1245 420" stroke="#d3d0ca" stroke-width="7.1" fill="none" stroke-linecap="round" stroke-linejoin="round"/><path d="M800 1000 C900 800 1000 620 1100 520 L1245 420" stroke="#ffffff" stroke-width="4.5" fill="none" stroke-linecap="round" stroke-linejoin="round"/><path d="M360 660 C420 780 480 900 580 930" stroke="#d3d0ca" stroke-width="7.1" fill="none" stroke-linecap="round" stroke-linejoin="round"/><path d="M360 660 C420 780 480 900 580 930" stroke="#ffffff" stroke-width="4.5" fill="none" stroke-linecap="round" stroke-linejoin="round"/><path d="M0 640 L160 635" stroke="#d3d0ca" stroke-width="7.1" fill="none" stroke-linecap="round" stroke-linejoin="round"/><path d="M0 640 L160 635" stroke="#ffffff" stroke-width="4.5" fill="none" stroke-linecap="round" stroke-linejoin="round"/><path d="M330 640 L370 660" stroke="#d3d0ca" stroke-width="7.1" fill="none" stroke-linecap="round" stroke-linejoin="round"/><path d="M330 640 L370 660" stroke="#ffffff" stroke-width="4.5" fill="none" stroke-linecap="round" stroke-linejoin="round"/><path d="M100 330 C200 300 300 260 380 200" stroke="#d3d0ca" stroke-width="7.1" fill="none" stroke-linecap="round" stroke-linejoin="round"/><path d="M100 330 C200 300 300 260 380 200" stroke="#ffffff" stroke-width="4.5" fill="none" stroke-linecap="round" stroke-linejoin="round"/><path d="M130 420 L300 500" stroke="#d3d0ca" stroke-width="7.1" fill="none" stroke-linecap="round" stroke-linejoin="round"/><path d="M130 420 L300 500" stroke="#ffffff" stroke-width="4.5" fill="none" stroke-linecap="round" stroke-linejoin="round"/><path d="M540 400 L700 270" stroke="#d3d0ca" stroke-width="7.1" fill="none" stroke-linecap="round" stroke-linejoin="round"/><path d="M540 400 L700 270" stroke="#ffffff" stroke-width="4.5" fill="none" stroke-linecap="round" stroke-linejoin="round"/><path d="M560 520 L560 700" stroke="#d3d0ca" stroke-width="7.1" fill="none" stroke-linecap="round" stroke-linejoin="round"/><path d="M560 520 L560 700" stroke="#ffffff" stroke-width="4.5" fill="none" stroke-linecap="round" stroke-linejoin="round"/><path d="M960 580 L1100 700 L1180 800" stroke="#d3d0ca" stroke-width="7.1" fill="none" stroke-linecap="round" stroke-linejoin="round"/><path d="M960 580 L1100 700 L1180 800" stroke="#ffffff" stroke-width="4.5" fill="none" stroke-linecap="round" stroke-linejoin="round"/><path d="M1100 520 L1200 640" stroke="#d3d0ca" stroke-width="7.1" fill="none" stroke-linecap="round" stroke-linejoin="round"/><path d="M1100 520 L1200 640" stroke="#ffffff" stroke-width="4.5" fill="none" stroke-linecap="round" stroke-linejoin="round"/><path d="M100 740 C60 800 40 860 20 960" stroke="#d3d0ca" stroke-width="7.1" fill="none" stroke-linecap="round" stroke-linejoin="round"/><path d="M100 740 C60 800 40 860 20 960" stroke="#ffffff" stroke-width="4.5" fill="none" stroke-linecap="round" stroke-linejoin="round"/><path d="M600 640 C620 720 640 780 640 820" stroke="#d3d0ca" stroke-width="7.1" fill="none" stroke-linecap="round" stroke-linejoin="round"/><path d="M600 640 C620 720 640 780 640 820" stroke="#ffffff" stroke-width="4.5" fill="none" stroke-linecap="round" stroke-linejoin="round"/><path d="M920 330 C980 400 1040 420 1100 420" stroke="#d3d0ca" stroke-width="7.1" fill="none" stroke-linecap="round" stroke-linejoin="round"/><path d="M920 330 C980 400 1040 420 1100 420" stroke="#ffffff" stroke-width="4.5" fill="none" stroke-linecap="round" stroke-linejoin="round"/><path d="M480 400 C500 460 480 520 500 560" stroke="#cfb283" stroke-width="2.6" fill="none" stroke-dasharray="9 8"/><path d="M180 780 C220 860 240 920 260 1000" stroke="#cfb283" stroke-width="2.6" fill="none" stroke-dasharray="9 8"/><path d="M480 740 C500 800 490 860 520 900" stroke="#cfb283" stroke-width="2.6" fill="none" stroke-dasharray="9 8"/><path d="M900 180 C940 240 900 280 920 300" stroke="#cfb283" stroke-width="2.6" fill="none" stroke-dasharray="9 8"/><path d="M-5 45 C40 35 80 28 110 12" stroke="#d2607a" stroke-width="23" fill="none" stroke-linecap="round" stroke-linejoin="round"/><path d="M-5 45 C40 35 80 28 110 12" stroke="#e892a2" stroke-width="20" fill="none" stroke-linecap="round" stroke-linejoin="round"/><path d="M210 20 C260 60 320 100 420 120 L720 125" stroke="#e0a0ad" stroke-width="22" fill="none" stroke-linecap="round" stroke-linejoin="round"/><path d="M210 20 C260 60 320 100 420 120 L720 125" stroke="#f0c0c9" stroke-width="20" fill="none" stroke-linecap="round" stroke-linejoin="round"/><path d="M720 125 C800 112 850 100 900 110 C1000 150 1080 190 1160 200 C1200 210 1230 240 1245 262" stroke="#d2607a" stroke-width="23" fill="none" stroke-linecap="round" stroke-linejoin="round"/><path d="M720 125 C800 112 850 100 900 110 C1000 150 1080 190 1160 200 C1200 210 1230 240 1245 262" stroke="#e892a2" stroke-width="20" fill="none" stroke-linecap="round" stroke-linejoin="round"/><path d="M130 20 C100 100 80 200 50 300 C30 400 10 500 0 620" stroke="#c4c78e" stroke-width="14" fill="none" stroke-linecap="round" stroke-linejoin="round"/><path d="M130 20 C100 100 80 200 50 300 C30 400 10 500 0 620" stroke="#f7fabf" stroke-width="11" fill="none" stroke-linecap="round" stroke-linejoin="round"/><path d="M100 20 C70 100 50 200 20 300" stroke="#c4c78e" stroke-width="12" fill="none" stroke-linecap="round" stroke-linejoin="round"/><path d="M100 20 C70 100 50 200 20 300" stroke="#f7fabf" stroke-width="9" fill="none" stroke-linecap="round" stroke-linejoin="round"/><path d="M40 60 L130 160" stroke="#c4c78e" stroke-width="12" fill="none" stroke-linecap="round" stroke-linejoin="round"/><path d="M40 60 L130 160" stroke="#f7fabf" stroke-width="9" fill="none" stroke-linecap="round" stroke-linejoin="round"/><path d="M390 15 L440 90 L560 60 L700 70" stroke="#c4c78e" stroke-width="13" fill="none" stroke-linecap="round" stroke-linejoin="round"/><path d="M390 15 L440 90 L560 60 L700 70" stroke="#f7fabf" stroke-width="10" fill="none" stroke-linecap="round" stroke-linejoin="round"/><path d="M740 180 L760 90 L900 90 C1000 140 1060 200 1110 250 L1130 280 L1160 250 L1210 270" stroke="#c4c78e" stroke-width="13" fill="none" stroke-linecap="round" stroke-linejoin="round"/><path d="M740 180 L760 90 L900 90 C1000 140 1060 200 1110 250 L1130 280 L1160 250 L1210 270" stroke="#f7fabf" stroke-width="10" fill="none" stroke-linecap="round" stroke-linejoin="round"/><path d="M560 15 C620 60 680 60 690 100 L690 300 C720 380 750 420 740 500 C700 560 660 600 700 620 C760 580 770 640 740 720 C700 780 680 800 690 820 L640 900" stroke="#c4c78e" stroke-width="14" fill="none" stroke-linecap="round" stroke-linejoin="round"/><path d="M560 15 C620 60 680 60 690 100 L690 300 C720 380 750 420 740 500 C700 560 660 600 700 620 C760 580 770 640 740 720 C700 780 680 800 690 820 L640 900" stroke="#f7fabf" stroke-width="11" fill="none" stroke-linecap="round" stroke-linejoin="round"/><path d="M690 830 L800 820 L770 870 L810 1040 L780 1080" stroke="#c4c78e" stroke-width="13" fill="none" stroke-linecap="round" stroke-linejoin="round"/><path d="M690 830 L800 820 L770 870 L810 1040 L780 1080" stroke="#f7fabf" stroke-width="10" fill="none" stroke-linecap="round" stroke-linejoin="round"/><path d="M620 900 L580 920 L530 1080" stroke="#c4c78e" stroke-width="14" fill="none" stroke-linecap="round" stroke-linejoin="round"/><path d="M620 900 L580 920 L530 1080" stroke="#f7fabf" stroke-width="11" fill="none" stroke-linecap="round" stroke-linejoin="round"/><path d="M370 10 C470 150 500 300 470 450 C440 560 380 620 330 700 C270 780 250 880 330 960 C420 1040 560 1030 640 960 C740 870 800 760 860 640 C920 500 1000 380 1100 310 C1160 270 1200 262 1245 258" stroke="#5a5a5a" stroke-width="7.6" fill="none"/><path d="M370 10 C470 150 500 300 470 450 C440 560 380 620 330 700 C270 780 250 880 330 960 C420 1040 560 1030 640 960 C740 870 800 760 860 640 C920 500 1000 380 1100 310 C1160 270 1200 262 1245 258" stroke="#fff" stroke-width="2.8" fill="none" stroke-dasharray="14 14"/><path d="M560 20 C620 80 700 110 800 80 S1000 60 1100 80 S1200 120 1245 150" stroke="#5a5a5a" stroke-width="7.6" fill="none"/><path d="M560 20 C620 80 700 110 800 80 S1000 60 1100 80 S1200 120 1245 150" stroke="#fff" stroke-width="2.8" fill="none" stroke-dasharray="14 14"/><path d="M1000 1000 L1130 620 L1245 430" stroke="#999" stroke-width="5" stroke-dasharray="4 10" fill="none"/><path d="M940 1080 L1090 800 L1170 620 C1190 560 1220 500 1245 450" stroke="#d88a74" stroke-width="20" fill="none" stroke-linecap="round" stroke-linejoin="round"/><path d="M940 1080 L1090 800 L1170 620 C1190 560 1220 500 1245 450" stroke="#f5b09a" stroke-width="17" fill="none" stroke-linecap="round" stroke-linejoin="round"/><rect x="925" y="80" width="20" height="18" fill="#7a7ac0"/><rect x="596" y="58" width="14" height="14" fill="#7a7ac0"/><rect x="1165" y="518" width="20" height="20" fill="#7a7ac0"/><polygon points="288,258 302,278 274,278" fill="#c77f3c"/></g>
<g transform="translate(828,-4) scale(0.24213)"><polygon points="380,100 700,80 800,150 820,240 700,330 450,330 380,250" fill="url(#st)"/><polygon points="300,460 420,420 440,560 300,600" fill="url(#st)"/><polygon points="400,340 700,340 780,380 640,520 500,640 400,600 440,440" fill="url(#si)"/><polygon points="700,440 820,460 800,520 700,500" fill="url(#si)"/><polygon points="850,330 1111,300 1111,560 1000,600 900,720 800,700 830,560 900,480" fill="#b3d4a4"/><polygon points="460,20 760,20 700,90 560,100 460,60" fill="#b3d4a4"/><polygon points="300,180 330,170 360,250 300,270" fill="#b3d4a4"/><polygon points="560,760 740,790 720,830 570,800" fill="#b3d4a4"/><polygon points="1000,760 1111,740 1111,1000 980,900" fill="#cdebb0"/><polygon points="860,800 960,780 960,860 880,880" fill="#cdebb0"/><polygon points="780,20 900,20 880,60 800,70" fill="#cdebb0"/><polygon points="540,250 600,240 620,310 560,320" fill="#dff0d8"/><polygon points="900,260 1111,300 1111,340 900,300" fill="#f2dad9"/><polygon points="440,1000 520,960 560,1074 420,1074" fill="#b3d4a4"/><polygon points="1000,840 1111,820 1111,1000 1040,980" fill="#aedfa3" fill-opacity="0.6"/><polygon points="330,600 420,610 400,700 320,690" fill="#cdebb0"/><polygon points="620,20 700,30 690,80 630,70" fill="#cdebb0"/><polygon points="860,600 940,640 900,720 820,700" fill="#b3d4a4"/><path d="M1115 215 C1040 180 960 100 920 60 C880 40 840 70 830 110 C820 170 790 200 780 240 C770 300 790 360 770 400 C700 440 640 500 600 560 C540 620 500 640 510 700 C480 780 430 860 380 920 C340 970 300 1000 270 1030" stroke="#aad3df" stroke-width="12" fill="none"/><path d="M1115 215 C1040 180 960 100 920 60 C880 40 840 70 830 110" stroke="#b8d9a8" stroke-width="10" fill="none" transform="translate(-14,14)"/><path d="M300 470 L700 350" stroke="#d3d0ca" stroke-width="7.1" fill="none" stroke-linecap="round" stroke-linejoin="round"/><path d="M300 470 L700 350" stroke="#ffffff" stroke-width="4.5" fill="none" stroke-linecap="round" stroke-linejoin="round"/><path d="M350 1000 L300 800" stroke="#d3d0ca" stroke-width="7.1" fill="none" stroke-linecap="round" stroke-linejoin="round"/><path d="M350 1000 L300 800" stroke="#ffffff" stroke-width="4.5" fill="none" stroke-linecap="round" stroke-linejoin="round"/><path d="M300 760 C340 680 400 620 430 580 L700 350" stroke="#d3d0ca" stroke-width="7.1" fill="none" stroke-linecap="round" stroke-linejoin="round"/><path d="M300 760 C340 680 400 620 430 580 L700 350" stroke="#ffffff" stroke-width="4.5" fill="none" stroke-linecap="round" stroke-linejoin="round"/><path d="M400 330 L380 250" stroke="#d3d0ca" stroke-width="7.1" fill="none" stroke-linecap="round" stroke-linejoin="round"/><path d="M400 330 L380 250" stroke="#ffffff" stroke-width="4.5" fill="none" stroke-linecap="round" stroke-linejoin="round"/><path d="M820 240 L960 230 L1000 270" stroke="#d3d0ca" stroke-width="7.1" fill="none" stroke-linecap="round" stroke-linejoin="round"/><path d="M820 240 L960 230 L1000 270" stroke="#ffffff" stroke-width="4.5" fill="none" stroke-linecap="round" stroke-linejoin="round"/><path d="M860 720 C920 740 1000 740 1060 800 S1100 900 1111 920" stroke="#d3d0ca" stroke-width="7.1" fill="none" stroke-linecap="round" stroke-linejoin="round"/><path d="M860 720 C920 740 1000 740 1060 800 S1100 900 1111 920" stroke="#ffffff" stroke-width="4.5" fill="none" stroke-linecap="round" stroke-linejoin="round"/><path d="M760 960 C820 980 860 960 900 1000" stroke="#d3d0ca" stroke-width="7.1" fill="none" stroke-linecap="round" stroke-linejoin="round"/><path d="M760 960 C820 980 860 960 900 1000" stroke="#ffffff" stroke-width="4.5" fill="none" stroke-linecap="round" stroke-linejoin="round"/><path d="M420 100 C500 140 600 120 700 90" stroke="#d3d0ca" stroke-width="7.1" fill="none" stroke-linecap="round" stroke-linejoin="round"/><path d="M420 100 C500 140 600 120 700 90" stroke="#ffffff" stroke-width="4.5" fill="none" stroke-linecap="round" stroke-linejoin="round"/><path d="M610 620 L600 900 L700 920" stroke="#c9a777" stroke-width="2.2" fill="none"/><path d="M520 680 L780 650" stroke="#c9a777" stroke-width="2.2" fill="none"/><path d="M560 800 L740 830" stroke="#c9a777" stroke-width="2.2" fill="none"/><path d="M740 650 L720 830" stroke="#c9a777" stroke-width="2.2" fill="none"/><path d="M500 900 L600 900" stroke="#c9a777" stroke-width="2.2" fill="none"/><path d="M880 340 C940 420 960 480 1000 560" stroke="#c9a777" stroke-width="2.2" fill="none"/><path d="M940 860 C980 900 1020 880 1040 940" stroke="#c9a777" stroke-width="2.2" fill="none"/><path d="M290 225 C310 260 330 310 350 340 L440 350" stroke="#d2607a" stroke-width="18" fill="none" stroke-linecap="round" stroke-linejoin="round"/><path d="M290 225 C310 260 330 310 350 340 L440 350" stroke="#e892a2" stroke-width="15" fill="none" stroke-linecap="round" stroke-linejoin="round"/><path d="M297 420 C320 390 350 365 380 350 L440 350" stroke="#d88a74" stroke-width="20" fill="none" stroke-linecap="round" stroke-linejoin="round"/><path d="M297 420 C320 390 350 365 380 350 L440 350" stroke="#f5b09a" stroke-width="17" fill="none" stroke-linecap="round" stroke-linejoin="round"/><path d="M440 350 C520 360 600 350 660 340 C740 300 800 260 860 245 C940 240 1020 270 1115 295" stroke="#d88a74" stroke-width="20" fill="none" stroke-linecap="round" stroke-linejoin="round"/><path d="M440 350 C520 360 600 350 660 340 C740 300 800 260 860 245 C940 240 1020 270 1115 295" stroke="#f5b09a" stroke-width="17" fill="none" stroke-linecap="round" stroke-linejoin="round"/><path d="M300 250 C360 260 400 250 430 240" stroke="#c4c78e" stroke-width="12" fill="none" stroke-linecap="round" stroke-linejoin="round"/><path d="M300 250 C360 260 400 250 430 240" stroke="#f7fabf" stroke-width="9" fill="none" stroke-linecap="round" stroke-linejoin="round"/><path d="M400 330 L460 240 C520 210 600 200 690 190 C720 230 730 290 740 330" stroke="#c4c78e" stroke-width="13" fill="none" stroke-linecap="round" stroke-linejoin="round"/><path d="M400 330 L460 240 C520 210 600 200 690 190 C720 230 730 290 740 330" stroke="#f7fabf" stroke-width="10" fill="none" stroke-linecap="round" stroke-linejoin="round"/><path d="M800 250 C800 350 790 450 770 540 C750 640 740 760 730 830 C720 900 700 960 680 1030" stroke="#c4c78e" stroke-width="11" fill="none" stroke-linecap="round" stroke-linejoin="round"/><path d="M800 250 C800 350 790 450 770 540 C750 640 740 760 730 830 C720 900 700 960 680 1030" stroke="#f7fabf" stroke-width="8" fill="none" stroke-linecap="round" stroke-linejoin="round"/><path d="M800 510 C840 520 830 560 860 570 C880 600 960 580 1020 590 C1040 640 1060 700 1090 740 L1115 765" stroke="#c4c78e" stroke-width="11" fill="none" stroke-linecap="round" stroke-linejoin="round"/><path d="M800 510 C840 520 830 560 860 570 C880 600 960 580 1020 590 C1040 640 1060 700 1090 740 L1115 765" stroke="#f7fabf" stroke-width="8" fill="none" stroke-linecap="round" stroke-linejoin="round"/><path d="M297 150 C340 200 380 215 420 215 C560 200 650 160 700 150 C800 140 900 160 1000 190 C1050 205 1090 215 1115 220" stroke="#5a5a5a" stroke-width="7.6" fill="none"/><path d="M297 150 C340 200 380 215 420 215 C560 200 650 160 700 150 C800 140 900 160 1000 190 C1050 205 1090 215 1115 220" stroke="#fff" stroke-width="2.8" fill="none" stroke-dasharray="14 14"/><path d="M297 245 C340 230 390 220 420 215" stroke="#5a5a5a" stroke-width="7.6" fill="none"/><path d="M297 245 C340 230 390 220 420 215" stroke="#fff" stroke-width="2.8" fill="none" stroke-dasharray="14 14"/><path d="M780 20 C760 80 720 120 690 150" stroke="#5a5a5a" stroke-width="7.6" fill="none"/><path d="M780 20 C760 80 720 120 690 150" stroke="#fff" stroke-width="2.8" fill="none" stroke-dasharray="14 14"/><g fill="#7aa7d6"><rect x="1015" y="60" width="18" height="5"/><rect x="1020" y="85" width="18" height="5"/><rect x="1018" y="110" width="18" height="5"/></g></g>
<g transform="translate(0,-4) scale(0.24213)"><rect x="970" y="95" width="133" height="55" rx="7" fill="#f1efc9" stroke="#c5c596" stroke-width="2.5"/><text x="1036.5" y="133" font-size="30" fill="#4c4c33" text-anchor="middle">SP317</text><rect x="1068" y="300" width="132" height="52" rx="7" fill="#f1efc9" stroke="#c5c596" stroke-width="2.5"/><text x="1134.0" y="337" font-size="30" fill="#4c4c33" text-anchor="middle">SP320</text><text x="612" y="443" font-size="35" fill="#444"  stroke="#fff" stroke-opacity=".75" stroke-width="4" paint-order="stroke">Solomeo</text></g>
<g transform="translate(300,-4) scale(0.24213)"><rect x="110" y="502" width="183" height="54" rx="7" fill="#f1f1ef" stroke="#bdbdb8" stroke-width="2.5"/><text x="201.5" y="540" font-size="30" fill="#555" text-anchor="middle">SP318/2</text><rect x="578" y="516" width="138" height="59" rx="7" fill="#f8e3c6" stroke="#d8b68c" stroke-width="2.5"/><text x="647.0" y="556" font-size="30" fill="#5c4524" text-anchor="middle">SR220</text><rect x="995" y="740" width="177" height="55" rx="7" fill="#f1efc9" stroke="#c5c596" stroke-width="2.5"/><text x="1083.5" y="778" font-size="30" fill="#4c4c33" text-anchor="middle">SP344/1</text><text x="460" y="112" font-size="32" fill="#444"  stroke="#fff" stroke-opacity=".75" stroke-width="4" paint-order="stroke">Lacugnano</text><text x="250" y="298" font-size="34" fill="#444"  stroke="#fff" stroke-opacity=".75" stroke-width="4" paint-order="stroke">Santa Sabina</text><text x="908" y="50" font-size="27" fill="#a8324a" font-style="italic" stroke="#fff" stroke-opacity=".75" stroke-width="4" paint-order="stroke">Perugia Madonna Alto</text><text transform="translate(780,1072) rotate(-42)" font-size="22" fill="#555">via Settevalli</text></g>
<g transform="translate(600,-4) scale(0.24213)"><text x="288" y="140" font-size="27" fill="#a8324a" font-style="italic" stroke="#fff" stroke-opacity=".75" stroke-width="4" paint-order="stroke">Perugia - Prepo</text><text x="740" y="143" font-size="27" fill="#a8324a" font-style="italic" stroke="#fff" stroke-opacity=".75" stroke-width="4" paint-order="stroke">Perugia Centro - Piscille</text><text x="288" y="318" font-size="30" fill="#8b5a3c" text-anchor="middle" stroke="#fff" stroke-opacity=".75" stroke-width="4" paint-order="stroke">Collina</text><text x="288" y="360" font-size="30" fill="#8b5a3c" text-anchor="middle" stroke="#fff" stroke-opacity=".75" stroke-width="4" paint-order="stroke">di Prepo</text><text x="288" y="400" font-size="30" fill="#8b5a3c" text-anchor="middle" stroke="#fff" stroke-opacity=".75" stroke-width="4" paint-order="stroke">380 m</text><text x="225" y="455" font-size="28" fill="#777" text-anchor="middle" font-style="italic" stroke="#fff" stroke-opacity=".75" stroke-width="4" paint-order="stroke">Borghetto</text><text x="225" y="497" font-size="28" fill="#777" text-anchor="middle" font-style="italic" stroke="#fff" stroke-opacity=".75" stroke-width="4" paint-order="stroke">di Prepo</text><text x="1052" y="675" font-size="28" fill="#8d2f3f" font-style="italic" stroke="#fff" stroke-opacity=".75" stroke-width="4" paint-order="stroke">Balanzano</text><text x="1188" y="332" font-size="27" fill="#a8324a" font-style="italic" stroke="#fff" stroke-opacity=".75" stroke-width="4" paint-order="stroke">Terni - Roma</text><text x="1150" y="385" font-size="27" fill="#a8324a" font-style="italic" stroke="#fff" stroke-opacity=".75" stroke-width="4" paint-order="stroke">Assisi - Foligno - Cesena</text><text transform="translate(697,282) rotate(-90)" font-size="22" fill="#444" stroke="#fff" stroke-width="3" paint-order="stroke">Strada Tuderte</text><text transform="translate(962,1066) rotate(-64)" font-size="22" fill="#7a3b2a">bis Tiberina</text><rect x="160" y="603" width="182" height="55" rx="7" fill="#f1f1ef" stroke="#bdbdb8" stroke-width="2.5"/><text x="251.0" y="641" font-size="30" fill="#555" text-anchor="middle">SP344/3</text><rect x="972" y="826" width="160" height="52" rx="7" fill="#f6cfc2" stroke="#d9a08f" stroke-width="2.5"/><text x="1052.0" y="863" font-size="30" fill="#6b3a2c" text-anchor="middle">SS3bis</text><rect x="668" y="1042" width="180" height="50" rx="7" fill="#f1efc9" stroke="#c5c596" stroke-width="2.5"/><text x="758.0" y="1078" font-size="30" fill="#4c4c33" text-anchor="middle">SP318/3</text></g>
<g transform="translate(828,-4) scale(0.24213)"><text x="475" y="204" font-size="42" fill="#444"  stroke="#fff" stroke-opacity=".75" stroke-width="4" paint-order="stroke">Ponte San</text><text x="488" y="262" font-size="42" fill="#444"  stroke="#fff" stroke-opacity=".75" stroke-width="4" paint-order="stroke">Giovanni</text><text x="602" y="310" font-size="27" fill="#a8324a" font-style="italic" stroke="#fff" stroke-opacity=".75" stroke-width="4" paint-order="stroke">Ponte San Giovanni</text><text x="415" y="457" font-size="28" fill="#7a5b7a" font-style="italic" stroke="#fff" stroke-opacity=".75" stroke-width="4" paint-order="stroke">Zona Industriale</text><text x="458" y="499" font-size="28" fill="#7a5b7a" font-style="italic" stroke="#fff" stroke-opacity=".75" stroke-width="4" paint-order="stroke">Molinaccio</text><text x="490" y="540" font-size="28" fill="#7a5b7a" font-style="italic" stroke="#fff" stroke-opacity=".75" stroke-width="4" paint-order="stroke">- Ponte</text><text x="440" y="582" font-size="28" fill="#7a5b7a" font-style="italic" stroke="#fff" stroke-opacity=".75" stroke-width="4" paint-order="stroke">San Giovanni</text><text x="1068" y="248" font-size="27" fill="#a8324a" font-style="italic" stroke="#fff" stroke-opacity=".75" stroke-width="4" paint-order="stroke">Ass</text><text transform="translate(470,805) rotate(-62)" font-size="24" fill="#6b9ac4" font-style="italic">Tevere</text><text transform="translate(790,532) rotate(-84)" font-size="21" fill="#444" stroke="#fff" stroke-width="3" paint-order="stroke">Via Ferriera</text><text transform="translate(716,1012) rotate(-80)" font-size="21" fill="#444" stroke="#fff" stroke-width="3" paint-order="stroke">da per Torgiano</text><rect x="970" y="680" width="160" height="52" rx="7" fill="#f1efc9" stroke="#c5c596" stroke-width="2.5"/><text x="1050.0" y="717" font-size="30" fill="#4c4c33" text-anchor="middle">SP401/2</text></g>
</svg><svg class="i" style="left:536.5px;top:83px;width:21px;height:34px" viewBox="0 0 25 41"><defs><linearGradient id="mk" x1="0" y1="0" x2="0" y2="1"><stop offset="0" stop-color="#5f9ad6"/><stop offset=".5" stop-color="#427fc3"/><stop offset="1" stop-color="#3470b4"/></linearGradient></defs><ellipse cx="20" cy="38" rx="12" ry="3.500" fill="#000" fill-opacity=".08" transform="rotate(-18 20 38)"/><path d="M12.500 .8C5.800 .8 .8 6 .8 12.500c0 3 1.200 6 2.600 8.600L12.500 40.200l9.100-19.100c1.400-2.600 2.600-5.600 2.600-8.600C24.200 6 19.200 .8 12.500 .8z" fill="url(#mk)" stroke="#2a64a3" stroke-width="1.2"/><circle cx="12.500" cy="12.300" r="4.200" fill="#fff"/></svg>
        <div id="zc" class="abs"><div style="top:0">+</div><div style="top:26px;border-top:1px solid #ccc">−</div></div>
        <div id="attr" class="abs"><b>Segnala un problema</b> <span style="color:#555">|</span> © <b>OpenStreetMap</b> contributors</div>
      </div>
      <div id="info" class="abs">
        <div class="a abs">AZIENDA OSPEDALIERA DI PERUGIA</div>
        <svg class="i" style="left:14px;top:40.1px;width:10.5px;height:12px" ><use href="#i-pin"/></svg><div class="r abs" style="top:39.2px">PIAZZALE GIORGIO MENGHINI, 8/9</div>
        <svg class="i" style="left:13.5px;top:61.9px;width:12px;height:11px" ><use href="#i-city"/></svg><div class="r abs" style="top:60.3px">PERUGIA</div>
        <svg class="i" style="left:13.2px;top:82.7px;width:12.6px;height:12.6px" ><use href="#i-globe"/></svg><div class="r abs" style="top:81.4px">UMBRIA</div>
        <div class="bt abs" style="left:13.2px;width:156px"><svg class="i" style="left:10px;top:8.5px;width:12.5px;height:10.5px" ><use href="#i-map"/></svg><span style="left:25.8px">Apri in OpenStreetMap</span></div>
        <div class="bt abs" style="left:177.7px;width:141px"><svg class="i" style="left:11.5px;top:8px;width:10px;height:11.5px" ><use href="#i-pin"/></svg><span style="left:25.5px">Apri in Google Maps</span></div>
      </div>
    </div>
  </div>
</div>
<div id="badge" class="abs"><svg class="i" style="left:6px;top:0;width:100px;height:110px" viewBox="0 0 976 1074">
<g stroke="#000" stroke-width="30" stroke-linejoin="round" stroke-linecap="round">
<path d="M110 660Q110 575 200 558L340 535H560L700 558Q800 575 800 660V940Q800 995 745 995C650 990 560 968 455 965C350 975 250 1000 160 995Q105 990 105 940Z" fill="#4e5d7c"/>
<rect x="358" y="440" width="195" height="130" fill="#f6c9a4"/>
<circle cx="292" cy="295" r="40" fill="#f6c9a4"/><circle cx="618" cy="295" r="40" fill="#f6c9a4"/>
<path d="M318 200V340Q318 488 455 488Q592 488 592 340V200Z" fill="#f6c9a4"/>
<path d="M318 255V175Q322 125 382 122Q420 88 482 88Q588 90 592 175V255L565 188H385L350 205Z" fill="#8b4a2f"/>
<polygon points="358,548 455,575 552,548 492,805 412,805" fill="#0b0b0b" stroke-width="14"/>
<polygon points="345,540 268,600 243,655 312,680 292,742 418,800 362,548" fill="#5f7198" stroke-width="22"/>
<polygon points="565,540 640,600 665,655 596,680 616,742 492,800 548,548" fill="#5f7198" stroke-width="22"/>
<path d="M120 762H215L310 800V900L125 880Z" fill="#f6c9a4" stroke-width="26"/>
<path d="M640 802L790 768V832Z" fill="#f6c9a4" stroke-width="26"/>
<path d="M370 820L790 838V950Q790 975 745 985L370 940Z" fill="#4e5d7c" stroke-width="26"/>
</g>
<polygon points="380,566 440,590 400,610" fill="#fff"/><polygon points="530,566 470,590 510,610" fill="#fff"/>
<rect x="438" y="595" width="32" height="205" rx="14" fill="#4a90e2"/>
<rect x="305" y="818" width="52" height="88" fill="#e6e6e6"/>
<rect x="425" y="880" width="30" height="30"/><rect x="485" y="880" width="30" height="30"/>
<circle cx="385" cy="270" r="24"/><circle cx="525" cy="270" r="24"/>
<path d="M412 370Q455 382 500 356" fill="none" stroke="#000" stroke-width="22" stroke-linecap="round"/>
</svg>
<div class="t abs">Managers</div></div>
<div id="stats" class="abs">
  <div id="tabs" class="abs">
    <div class="tb on abs" style="left:0"><svg class="i" style="left:78.5px;top:12.5px;width:14px;height:13px" ><use href="#i-eye"/></svg><span style="left:99.5px">Overview</span></div>
    <div class="tb abs" style="left:229.9px"><svg class="i" style="left:88px;top:11.5px;width:13px;height:13px" ><use href="#i-doc"/></svg><span style="left:107.5px">Articoli</span></div>
    <div class="tb abs" style="left:459.8px"><svg class="i" style="left:83px;top:12px;width:13.5px;height:13.5px" ><use href="#i-star"/></svg><span style="left:103px">MedStar</span></div>
    <div class="tb abs" style="left:689.6px"><svg class="i" style="left:79.5px;top:12px;width:12px;height:12px" ><use href="#i-sci"/></svg><span style="left:97.5px">Ricercatori</span></div>
  </div>
  <div id="pan" class="abs">
    <svg class="i" style="left:38px;top:39.5px;width:12.6px;height:12.6px" ><use href="#i-web"/></svg><h4 style="top:38px">Statistiche Complessive</h4>
    <svg class="i" style="left:38.3px;top:132.5px;width:12px;height:12.5px" ><use href="#i-bars"/></svg><h4 style="top:130.5px">Statistiche Filtrate</h4>
    <div class="sc" style="left:38.2px;top:67.7px;width:270.3px"><svg class="i" style="left:7.8px;top:16.2px;width:11.2px;height:11.2px" ><use href="#i-doc"/></svg><span class="l" style="left:22px">Totale Articoli</span><span class="v">1367</span></div><div class="sc" style="left:325.2px;top:67.7px;width:270.3px"><svg class="i" style="left:7.8px;top:16.2px;width:11.2px;height:11.2px" ><use href="#i-bag"/></svg><span class="l" style="left:22px">Totale Grants</span><span class="v">1</span></div><div class="sc" style="left:612.3px;top:67.7px;width:270.3px"><svg class="i" style="left:7.8px;top:16.2px;width:11.2px;height:11.2px" ><use href="#i-tube"/></svg><span class="l" style="left:22px">Totale Clinical Trials</span><span class="v">303</span></div><div class="sc" style="left:38.2px;top:159.8px;width:198.5px"><svg class="i" style="left:7.8px;top:16.2px;width:11.2px;height:11.2px" ><use href="#i-clock"/></svg><span class="l" style="left:19.7px">Periodo:</span><span class="v">2000 - 2024</span></div><div class="sc" style="left:253.0px;top:159.8px;width:198.5px"><svg class="i" style="left:7.8px;top:16.2px;width:11.2px;height:11.2px" ><use href="#i-doc"/></svg><span class="l" style="left:19.7px">Articoli sul tema:</span><span class="v">1367</span></div><div class="sc" style="left:468.3px;top:159.8px;width:198.5px"><svg class="i" style="left:7.8px;top:16.2px;width:11.2px;height:11.2px" ><use href="#i-bust"/></svg><span class="l" style="left:19.7px">Ricercatori sul tema:</span><span class="v">943</span></div><div class="sc" style="left:683.5px;top:159.8px;width:198.5px"><svg class="i" style="left:7.8px;top:16.2px;width:11.2px;height:11.2px" ><use href="#i-horn"/></svg><span class="l" style="left:19.7px">Citazioni:</span><span class="v">51104</span></div><div class="sc" style="left:38.2px;top:221.9px;width:198.5px"><svg class="i" style="left:7.8px;top:16.2px;width:11.2px;height:11.2px" ><use href="#i-horn"/></svg><span class="l" style="left:19.7px">Media Citazioni:</span><span class="v">37.4</span></div><div class="sc" style="left:253.0px;top:221.9px;width:198.5px"><svg class="i" style="left:7.8px;top:16.2px;width:11.2px;height:11.2px" ><use href="#i-pen"/></svg><span class="l" style="left:19.7px">Articoli Singolo Autore:</span><span class="v">14</span></div><div class="sc" style="left:468.3px;top:221.9px;width:198.5px"><svg class="i" style="left:7.8px;top:16.2px;width:11.2px;height:11.2px" ><use href="#i-trend"/></svg><span class="l" style="left:19.7px">Età Media Articoli:</span><span class="v">9.3 anni</span></div><div class="sc" style="left:683.5px;top:221.9px;width:198.5px"><svg class="i" style="left:7.8px;top:16.2px;width:11.2px;height:11.2px" ><use href="#i-busts"/></svg><span class="l" style="left:19.7px">Media Autori/Articolo:</span><span class="v">14.3</span></div>
  </div>
</div>
<svg id="chart" class="abs" style="left:1330px;top:556px" width="720" height="490" viewBox="0 0 720 490" font-family="DejaVu Sans, Verdana, sans-serif">
<path d="M125.3 50.5V429M147.3 50.5V429M169.3 50.5V429M191.3 50.5V429M213.3 50.5V429M235.3 50.5V429M257.3 50.5V429M279.3 50.5V429M301.3 50.5V429M323.3 50.5V429M345.3 50.5V429M367.3 50.5V429M389.3 50.5V429M411.3 50.5V429M433.3 50.5V429M455.3 50.5V429M477.3 50.5V429M499.3 50.5V429M521.3 50.5V429M543.3 50.5V429M565.3 50.5V429M587.3 50.5V429M609.3 50.5V429M631.3 50.5V429M653.3 50.5V429M118.3 75.4H664.3M118.3 112.3H664.3M118.3 149.2H664.3M118.3 186.1H664.3M118.3 223.0H664.3M118.3 259.9H664.3M118.3 296.8H664.3M118.3 333.7H664.3M118.3 370.6H664.3M118.3 407.5H664.3" stroke="#eeeeee" stroke-width="1" fill="none"/>
<text x="333" y="27.3" font-size="13.3" fill="#444" text-anchor="middle">Produzione MedStar nel tempo</text>
<text x="117.3" y="79.0" font-size="9.4" fill="#444" text-anchor="end">Vienna Ludovini</text>
<text x="117.3" y="115.9" font-size="9.4" fill="#444" text-anchor="end">Stefano Fiorucci</text>
<text x="117.3" y="152.8" font-size="9.4" fill="#444" text-anchor="end">Stefania Gori</text>
<text x="117.3" y="189.7" font-size="9.4" fill="#444" text-anchor="end">Rita Chiari</text>
<text x="117.3" y="226.6" font-size="9.4" fill="#444" text-anchor="end">Paolo Calabresi</text>
<text x="117.3" y="263.5" font-size="9.4" fill="#444" text-anchor="end">Lucio Crinó</text>
<text x="117.3" y="300.4" font-size="9.4" fill="#444" text-anchor="end">Lucilla Parnetti</text>
<text x="117.3" y="337.3" font-size="9.4" fill="#444" text-anchor="end">Giulio Metro</text>
<text x="117.3" y="374.2" font-size="9.4" fill="#444" text-anchor="end">Eleonora Distrutti</text>
<text x="117.3" y="411.1" font-size="9.4" fill="#444" text-anchor="end">Angelo Sidoni</text>
<text transform="translate(122.8,439.5) rotate(30)" font-size="9.4" fill="#444">2001</text>
<text transform="translate(144.8,439.5) rotate(30)" font-size="9.4" fill="#444">2002</text>
<text transform="translate(166.8,439.5) rotate(30)" font-size="9.4" fill="#444">2003</text>
<text transform="translate(188.8,439.5) rotate(30)" font-size="9.4" fill="#444">2004</text>
<text transform="translate(210.8,439.5) rotate(30)" font-size="9.4" fill="#444">2005</text>
<text transform="translate(232.8,439.5) rotate(30)" font-size="9.4" fill="#444">2006</text>
<text transform="translate(254.8,439.5) rotate(30)" font-size="9.4" fill="#444">2007</text>
<text transform="translate(276.8,439.5) rotate(30)" font-size="9.4" fill="#444">2008</text>
<text transform="translate(298.8,439.5) rotate(30)" font-size="9.4" fill="#444">2009</text>
<text transform="translate(320.8,439.5) rotate(30)" font-size="9.4" fill="#444">2010</text>
<text transform="translate(342.8,439.5) rotate(30)" font-size="9.4" fill="#444">2011</text>
<text transform="translate(364.8,439.5) rotate(30)" font-size="9.4" fill="#444">2012</text>
<text transform="translate(386.8,439.5) rotate(30)" font-size="9.4" fill="#444">2013</text>
<text transform="translate(408.8,439.5) rotate(30)" font-size="9.4" fill="#444">2014</text>
<text transform="translate(430.8,439.5) rotate(30)" font-size="9.4" fill="#444">2015</text>
<text transform="translate(452.8,439.5) rotate(30)" font-size="9.4" fill="#444">2016</text>
<text transform="translate(474.8,439.5) rotate(30)" font-size="9.4" fill="#444">2017</text>
<text transform="translate(496.8,439.5) rotate(30)" font-size="9.4" fill="#444">2018</text>
<text transform="translate(518.8,439.5) rotate(30)" font-size="9.4" fill="#444">2019</text>
<text transform="translate(540.8,439.5) rotate(30)" font-size="9.4" fill="#444">2020</text>
<text transform="translate(562.8,439.5) rotate(30)" font-size="9.4" fill="#444">2021</text>
<text transform="translate(584.8,439.5) rotate(30)" font-size="9.4" fill="#444">2022</text>
<text transform="translate(606.8,439.5) rotate(30)" font-size="9.4" fill="#444">2023</text>
<text transform="translate(628.8,439.5) rotate(30)" font-size="9.4" fill="#444">2024</text>
<text transform="translate(650.8,439.5) rotate(30)" font-size="9.4" fill="#444">2025</text>
<text x="391" y="467" font-size="10.8" fill="#444" text-anchor="middle">Anno</text>
<text transform="translate(42.5,240) rotate(-90)" font-size="10.8" fill="#444" text-anchor="middle">Ricercatore</text>
<path d="M213.3 75.4H301.3" stroke="#3fa9c1" stroke-opacity="0.5" stroke-width="1.3" fill="none"/>
<path d="M345.3 75.4H587.3" stroke="#3fa9c1" stroke-opacity="0.5" stroke-width="1.3" fill="none"/>
<g fill="#3fa9c1"><circle cx="213.3" cy="75.4" r="2" fill-opacity="0.4"/><circle cx="235.3" cy="75.4" r="2" fill-opacity="0.4"/><circle cx="257.3" cy="75.4" r="2" fill-opacity="0.4"/><circle cx="279.3" cy="75.4" r="3.2" fill-opacity="0.8"/><circle cx="301.3" cy="75.4" r="2.7" fill-opacity="0.6"/><circle cx="345.3" cy="75.4" r="2.7" fill-opacity="0.85"/><circle cx="367.3" cy="75.4" r="5.4" fill-opacity="0.45"/><circle cx="389.3" cy="75.4" r="3.2" fill-opacity="0.45"/><circle cx="411.3" cy="75.4" r="3" fill-opacity="0.35"/><circle cx="433.3" cy="75.4" r="5" fill-opacity="1"/><circle cx="455.3" cy="75.4" r="4" fill-opacity="0.45"/><circle cx="477.3" cy="75.4" r="4.4" fill-opacity="0.45"/><circle cx="499.3" cy="75.4" r="3.4" fill-opacity="0.4"/><circle cx="521.3" cy="75.4" r="3.2" fill-opacity="0.4"/><circle cx="543.3" cy="75.4" r="3.6" fill-opacity="0.45"/><circle cx="565.3" cy="75.4" r="3.4" fill-opacity="0.4"/><circle cx="587.3" cy="75.4" r="2.2" fill-opacity="0.3"/></g>
<path d="M235.3 112.3H631.3" stroke="#b5b52c" stroke-opacity="0.7" stroke-width="1.3" fill="none"/>
<g fill="#b5b52c"><circle cx="147.3" cy="112.3" r="1.8" fill-opacity="0.4"/><circle cx="191.3" cy="112.3" r="2.4" fill-opacity="0.8"/><circle cx="235.3" cy="112.3" r="1.8" fill-opacity="0.4"/><circle cx="257.3" cy="112.3" r="1.8" fill-opacity="0.4"/><circle cx="279.3" cy="112.3" r="2.2" fill-opacity="0.5"/><circle cx="301.3" cy="112.3" r="3" fill-opacity="0.6"/><circle cx="323.3" cy="112.3" r="2.8" fill-opacity="0.5"/><circle cx="345.3" cy="112.3" r="4.2" fill-opacity="1"/><circle cx="367.3" cy="112.3" r="2.6" fill-opacity="0.5"/><circle cx="389.3" cy="112.3" r="3.2" fill-opacity="0.5"/><circle cx="411.3" cy="112.3" r="2" fill-opacity="0.6"/><circle cx="433.3" cy="112.3" r="2.1" fill-opacity="0.4"/><circle cx="455.3" cy="112.3" r="2.2" fill-opacity="0.45"/><circle cx="477.3" cy="112.3" r="2.8" fill-opacity="0.45"/><circle cx="499.3" cy="112.3" r="2.1" fill-opacity="0.4"/><circle cx="521.3" cy="112.3" r="3.2" fill-opacity="0.45"/><circle cx="543.3" cy="112.3" r="3.4" fill-opacity="0.5"/><circle cx="565.3" cy="112.3" r="2.9" fill-opacity="0.4"/><circle cx="587.3" cy="112.3" r="3.8" fill-opacity="0.4"/><circle cx="609.3" cy="112.3" r="3.3" fill-opacity="0.35"/><circle cx="631.3" cy="112.3" r="2.2" fill-opacity="0.35"/></g>
<path d="M191.3 149.2H477.3" stroke="#777777" stroke-opacity="0.9" stroke-width="1.3" fill="none"/>
<path d="M543.3 149.2H631.3" stroke="#777777" stroke-opacity="0.9" stroke-width="1.3" fill="none"/>
<g fill="#777777"><circle cx="191.3" cy="149.2" r="2.3" fill-opacity="0.3"/><circle cx="213.3" cy="149.2" r="2" fill-opacity="0.35"/><circle cx="235.3" cy="149.2" r="1.9" fill-opacity="0.3"/><circle cx="257.3" cy="149.2" r="3.2" fill-opacity="0.7"/><circle cx="279.3" cy="149.2" r="2.3" fill-opacity="0.65"/><circle cx="301.3" cy="149.2" r="2.2" fill-opacity="0.7"/><circle cx="323.3" cy="149.2" r="2" fill-opacity="0.7"/><circle cx="345.3" cy="149.2" r="3.8" fill-opacity="0.7"/><circle cx="367.3" cy="149.2" r="2.7" fill-opacity="0.5"/><circle cx="389.3" cy="149.2" r="3.1" fill-opacity="0.35"/><circle cx="411.3" cy="149.2" r="2.9" fill-opacity="0.45"/><circle cx="433.3" cy="149.2" r="3.2" fill-opacity="1"/><circle cx="455.3" cy="149.2" r="2.5" fill-opacity="0.4"/><circle cx="477.3" cy="149.2" r="2" fill-opacity="0.3"/><circle cx="543.3" cy="149.2" r="1.8" fill-opacity="0.6"/><circle cx="565.3" cy="149.2" r="3" fill-opacity="0.55"/><circle cx="587.3" cy="149.2" r="2.3" fill-opacity="0.4"/><circle cx="609.3" cy="149.2" r="2.1" fill-opacity="0.35"/><circle cx="631.3" cy="149.2" r="2.1" fill-opacity="0.35"/></g>
<path d="M345.3 186.1H565.3" stroke="#d269b6" stroke-opacity="0.65" stroke-width="1.3" fill="none"/>
<g fill="#d269b6"><circle cx="257.3" cy="186.1" r="1.8" fill-opacity="0.3"/><circle cx="301.3" cy="186.1" r="1.8" fill-opacity="0.3"/><circle cx="345.3" cy="186.1" r="2.2" fill-opacity="0.45"/><circle cx="367.3" cy="186.1" r="3.8" fill-opacity="0.35"/><circle cx="389.3" cy="186.1" r="2.9" fill-opacity="0.35"/><circle cx="411.3" cy="186.1" r="2.7" fill-opacity="0.3"/><circle cx="433.3" cy="186.1" r="4.1" fill-opacity="0.45"/><circle cx="455.3" cy="186.1" r="5.5" fill-opacity="0.4"/><circle cx="477.3" cy="186.1" r="6.5" fill-opacity="1"/><circle cx="499.3" cy="186.1" r="9.3" fill-opacity="0.85"/><circle cx="521.3" cy="186.1" r="6.2" fill-opacity="1"/><circle cx="543.3" cy="186.1" r="2.1" fill-opacity="0.35"/><circle cx="565.3" cy="186.1" r="4.3" fill-opacity="0.35"/><circle cx="631.3" cy="186.1" r="2" fill-opacity="0.3"/></g>
<path d="M213.3 223.0H587.3" stroke="#855045" stroke-opacity="0.55" stroke-width="1.3" fill="none"/>
<g fill="#855045"><circle cx="213.3" cy="223.0" r="1.9" fill-opacity="0.7"/><circle cx="235.3" cy="223.0" r="3.2" fill-opacity="0.6"/><circle cx="257.3" cy="223.0" r="3.3" fill-opacity="0.9"/><circle cx="279.3" cy="223.0" r="2.6" fill-opacity="0.6"/><circle cx="301.3" cy="223.0" r="2.6" fill-opacity="0.55"/><circle cx="323.3" cy="223.0" r="3" fill-opacity="0.9"/><circle cx="345.3" cy="223.0" r="4.5" fill-opacity="1"/><circle cx="367.3" cy="223.0" r="3.5" fill-opacity="0.65"/><circle cx="389.3" cy="223.0" r="2.2" fill-opacity="0.6"/><circle cx="411.3" cy="223.0" r="4.8" fill-opacity="0.9"/><circle cx="433.3" cy="223.0" r="3" fill-opacity="0.5"/><circle cx="455.3" cy="223.0" r="2.9" fill-opacity="0.6"/><circle cx="477.3" cy="223.0" r="1.9" fill-opacity="0.55"/><circle cx="499.3" cy="223.0" r="3.5" fill-opacity="0.6"/><circle cx="521.3" cy="223.0" r="2.6" fill-opacity="0.55"/><circle cx="543.3" cy="223.0" r="2.6" fill-opacity="0.5"/><circle cx="565.3" cy="223.0" r="1.7" fill-opacity="0.55"/><circle cx="587.3" cy="223.0" r="2.1" fill-opacity="0.5"/></g>
<path d="M235.3 259.9H587.3" stroke="#8a5fb8" stroke-opacity="0.4" stroke-width="1.3" fill="none"/>
<g fill="#8a5fb8"><circle cx="235.3" cy="259.9" r="1.9" fill-opacity="0.4"/><circle cx="257.3" cy="259.9" r="4.5" fill-opacity="0.45"/><circle cx="279.3" cy="259.9" r="2.7" fill-opacity="0.4"/><circle cx="301.3" cy="259.9" r="3.5" fill-opacity="0.4"/><circle cx="323.3" cy="259.9" r="2.6" fill-opacity="0.45"/><circle cx="345.3" cy="259.9" r="3.8" fill-opacity="0.45"/><circle cx="367.3" cy="259.9" r="9.3" fill-opacity="0.4"/><circle cx="389.3" cy="259.9" r="5.6" fill-opacity="1"/><circle cx="411.3" cy="259.9" r="5.6" fill-opacity="0.6"/><circle cx="433.3" cy="259.9" r="8.4" fill-opacity="0.45"/><circle cx="455.3" cy="259.9" r="7.6" fill-opacity="0.4"/><circle cx="477.3" cy="259.9" r="7.2" fill-opacity="0.45"/><circle cx="499.3" cy="259.9" r="2.7" fill-opacity="0.4"/><circle cx="521.3" cy="259.9" r="2.3" fill-opacity="0.4"/><circle cx="543.3" cy="259.9" r="1.9" fill-opacity="0.45"/><circle cx="565.3" cy="259.9" r="2.8" fill-opacity="0.4"/><circle cx="587.3" cy="259.9" r="1.9" fill-opacity="0.4"/></g>
<path d="M147.3 296.8H169.3" stroke="#c93636" stroke-opacity="0.8" stroke-width="1.3" fill="none"/>
<path d="M235.3 296.8H565.3" stroke="#c93636" stroke-opacity="0.8" stroke-width="1.3" fill="none"/>
<g fill="#c93636"><circle cx="147.3" cy="296.8" r="1.6" fill-opacity="0.4"/><circle cx="169.3" cy="296.8" r="2.2" fill-opacity="0.7"/><circle cx="235.3" cy="296.8" r="2.1" fill-opacity="0.4"/><circle cx="257.3" cy="296.8" r="2.3" fill-opacity="0.75"/><circle cx="279.3" cy="296.8" r="1.9" fill-opacity="0.6"/><circle cx="301.3" cy="296.8" r="2.2" fill-opacity="1"/><circle cx="323.3" cy="296.8" r="2.7" fill-opacity="0.7"/><circle cx="345.3" cy="296.8" r="2.6" fill-opacity="0.7"/><circle cx="367.3" cy="296.8" r="1.8" fill-opacity="0.45"/><circle cx="389.3" cy="296.8" r="1.8" fill-opacity="0.45"/><circle cx="411.3" cy="296.8" r="1.8" fill-opacity="0.45"/><circle cx="433.3" cy="296.8" r="2.6" fill-opacity="0.8"/><circle cx="455.3" cy="296.8" r="2.8" fill-opacity="1"/><circle cx="477.3" cy="296.8" r="2.4" fill-opacity="0.4"/><circle cx="499.3" cy="296.8" r="2.3" fill-opacity="0.65"/><circle cx="521.3" cy="296.8" r="2.2" fill-opacity="0.5"/><circle cx="543.3" cy="296.8" r="3.3" fill-opacity="0.7"/><circle cx="565.3" cy="296.8" r="2" fill-opacity="0.35"/></g>
<path d="M323.3 333.7H631.3" stroke="#3f9637" stroke-opacity="0.7" stroke-width="1.3" fill="none"/>
<g fill="#3f9637"><circle cx="323.3" cy="333.7" r="1.9" fill-opacity="0.85"/><circle cx="345.3" cy="333.7" r="2.2" fill-opacity="0.6"/><circle cx="367.3" cy="333.7" r="3.5" fill-opacity="0.55"/><circle cx="389.3" cy="333.7" r="2.3" fill-opacity="0.55"/><circle cx="411.3" cy="333.7" r="3.1" fill-opacity="0.4"/><circle cx="433.3" cy="333.7" r="3.9" fill-opacity="0.9"/><circle cx="455.3" cy="333.7" r="3.8" fill-opacity="0.65"/><circle cx="477.3" cy="333.7" r="4.6" fill-opacity="0.45"/><circle cx="499.3" cy="333.7" r="3.7" fill-opacity="0.4"/><circle cx="521.3" cy="333.7" r="3.8" fill-opacity="0.75"/><circle cx="543.3" cy="333.7" r="5.2" fill-opacity="1"/><circle cx="565.3" cy="333.7" r="4.3" fill-opacity="0.8"/><circle cx="587.3" cy="333.7" r="4.6" fill-opacity="0.55"/><circle cx="609.3" cy="333.7" r="3.1" fill-opacity="0.3"/><circle cx="631.3" cy="333.7" r="3.8" fill-opacity="0.3"/></g>
<path d="M257.3 370.6H631.3" stroke="#ee7f2d" stroke-opacity="0.85" stroke-width="1.3" fill="none"/>
<g fill="#ee7f2d"><circle cx="257.3" cy="370.6" r="1.8" fill-opacity="0.35"/><circle cx="279.3" cy="370.6" r="1.8" fill-opacity="0.35"/><circle cx="301.3" cy="370.6" r="3" fill-opacity="0.55"/><circle cx="323.3" cy="370.6" r="2.6" fill-opacity="0.5"/><circle cx="345.3" cy="370.6" r="3.9" fill-opacity="1"/><circle cx="367.3" cy="370.6" r="2.6" fill-opacity="0.5"/><circle cx="389.3" cy="370.6" r="3.2" fill-opacity="0.55"/><circle cx="411.3" cy="370.6" r="1.9" fill-opacity="0.5"/><circle cx="433.3" cy="370.6" r="2.1" fill-opacity="0.4"/><circle cx="455.3" cy="370.6" r="2.1" fill-opacity="0.4"/><circle cx="477.3" cy="370.6" r="2.9" fill-opacity="0.45"/><circle cx="499.3" cy="370.6" r="1.8" fill-opacity="0.4"/><circle cx="521.3" cy="370.6" r="3.2" fill-opacity="0.5"/><circle cx="543.3" cy="370.6" r="3.4" fill-opacity="0.55"/><circle cx="565.3" cy="370.6" r="2.8" fill-opacity="0.4"/><circle cx="587.3" cy="370.6" r="3.9" fill-opacity="0.4"/><circle cx="609.3" cy="370.6" r="3.2" fill-opacity="0.4"/><circle cx="631.3" cy="370.6" r="2.1" fill-opacity="0.35"/></g>
<path d="M213.3 407.5H301.3" stroke="#3570ae" stroke-opacity="0.6" stroke-width="1.3" fill="none"/>
<path d="M367.3 407.5H389.3" stroke="#3570ae" stroke-opacity="0.6" stroke-width="1.3" fill="none"/>
<path d="M433.3 407.5H565.3" stroke="#3570ae" stroke-opacity="0.6" stroke-width="1.3" fill="none"/>
<g fill="#3570ae"><circle cx="213.3" cy="407.5" r="2.2" fill-opacity="0.5"/><circle cx="235.3" cy="407.5" r="1.8" fill-opacity="0.45"/><circle cx="257.3" cy="407.5" r="2.4" fill-opacity="1"/><circle cx="279.3" cy="407.5" r="2.3" fill-opacity="0.95"/><circle cx="301.3" cy="407.5" r="1.9" fill-opacity="0.75"/><circle cx="367.3" cy="407.5" r="3.3" fill-opacity="0.6"/><circle cx="389.3" cy="407.5" r="2.6" fill-opacity="0.7"/><circle cx="433.3" cy="407.5" r="3.3" fill-opacity="0.5"/><circle cx="455.3" cy="407.5" r="2.2" fill-opacity="0.5"/><circle cx="477.3" cy="407.5" r="3.3" fill-opacity="0.65"/><circle cx="499.3" cy="407.5" r="2.5" fill-opacity="0.4"/><circle cx="521.3" cy="407.5" r="2.1" fill-opacity="0.45"/><circle cx="543.3" cy="407.5" r="2.5" fill-opacity="0.5"/><circle cx="565.3" cy="407.5" r="2.6" fill-opacity="0.45"/><circle cx="609.3" cy="407.5" r="1.8" fill-opacity="0.35"/></g>
<rect x="12" y="481.2" width="684.3" height="2" fill="#e6e6e6"/>
</svg>
</body>
</html>
